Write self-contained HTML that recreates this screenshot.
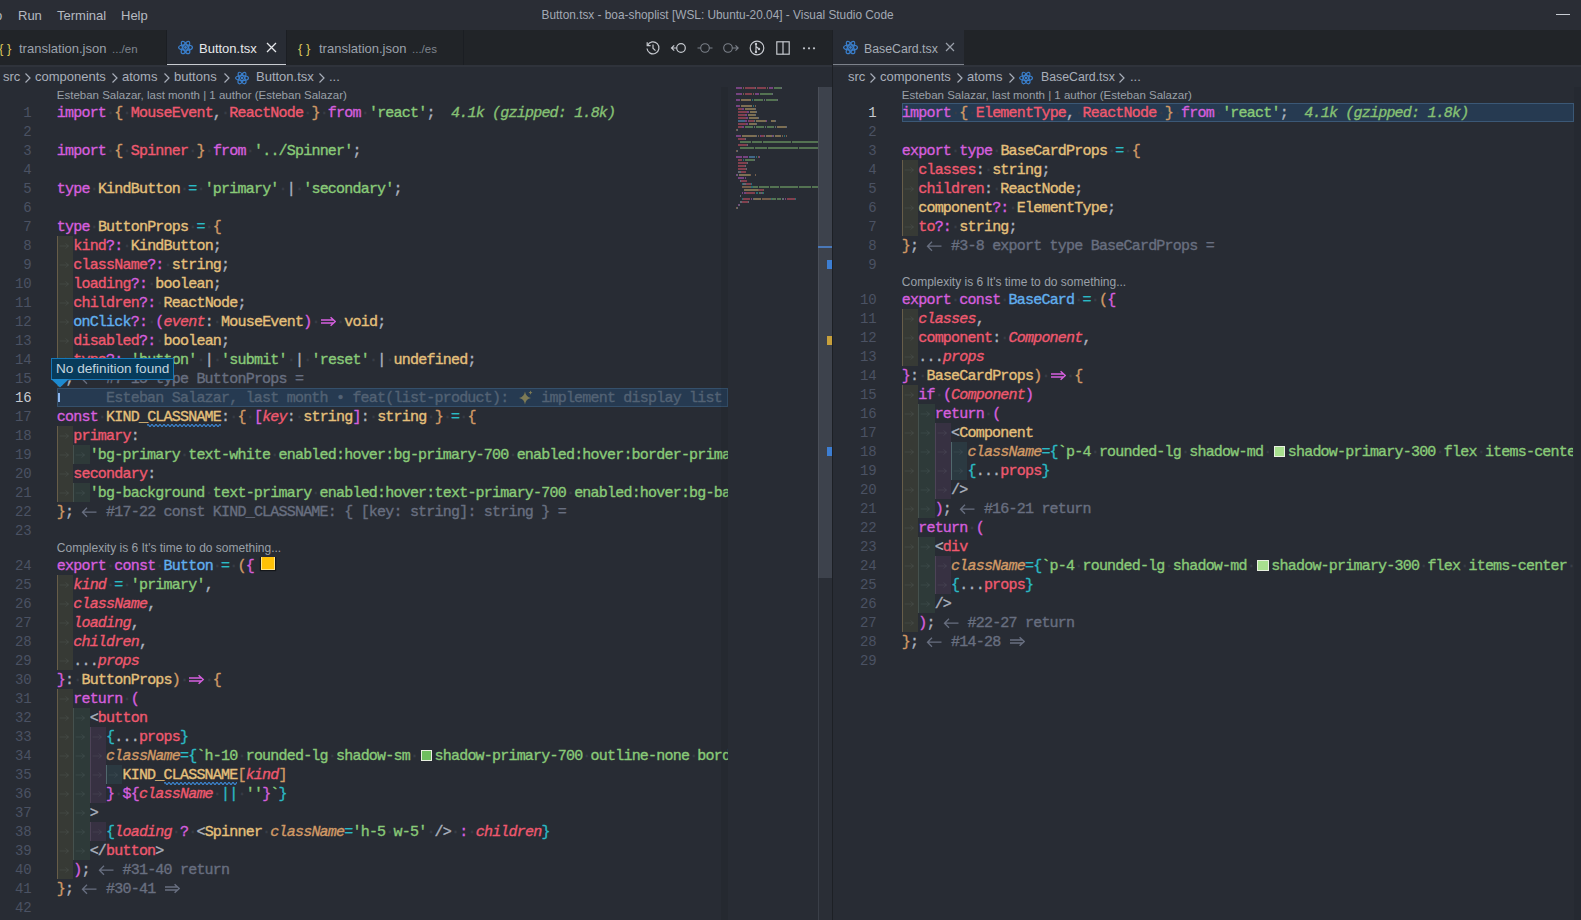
<!DOCTYPE html>
<html><head><meta charset="utf-8"><style>
*{margin:0;padding:0;box-sizing:border-box}
html,body{width:1581px;height:920px;overflow:hidden;background:#282c34}
body{position:relative;font-family:"Liberation Sans",sans-serif}
.abs{position:absolute}
#title{position:absolute;left:0;top:0;width:1581px;height:30px;background:#2a2d35}
.menu{position:absolute;top:8px;font-size:13px;color:#b6bac1;line-height:15px}
#ttl{position:absolute;left:541.6px;top:8px;font-size:11.85px;color:#a3a9b4;line-height:14px;white-space:nowrap}
#tabs{position:absolute;left:0;top:30px;width:1581px;height:35px;background:#212428}
.tab{position:absolute;top:30px;height:35px}
.tt{position:absolute;top:41px;font-size:13px;line-height:15px;white-space:nowrap}
.ai{position:absolute;top:40px}
.bc{position:absolute;font-size:13px;line-height:20px;color:#a9afba;white-space:nowrap}
.lens{position:absolute;font-size:11.5px;line-height:16px;height:16px;color:#9aa0a8;white-space:nowrap}
.cl{position:absolute;height:19px;white-space:pre;overflow:hidden;font-family:"Liberation Mono",monospace;font-size:15px;letter-spacing:-0.790px;line-height:19px;color:#abb2bf;-webkit-text-stroke:0.35px currentColor}
.cl span{font-family:"Liberation Mono",monospace}
.ln{position:absolute;width:40px;text-align:right;height:19px;font-family:"Liberation Mono",monospace;font-size:14px;letter-spacing:-0.2px;line-height:20px;color:#4b5263}
.ln.act{color:#c6cad1}
.ib{position:absolute;height:19px}
.gd{position:absolute;width:1px;height:19px}
.ta{position:absolute}
.d{color:#383d47}
.k{color:#d55fde} .y{color:#e5c07b} .r{color:#ef596f} .ri{color:#ef596f;font-style:italic}
.s{color:#89ca78} .c{color:#2bbac5} .g{color:#abb2bf} .bl{color:#61afef}
.oi{color:#d19a66;font-style:italic} .b1{color:#d19a66} .b2{color:#d55fde} .b3{color:#2bbac5}
.cm{color:#686f80} .ic{color:#86c174;font-style:italic} .bm{color:#536274}
.sq{position:relative} .wv{position:absolute;left:0;top:14.30px}
.wd2{display:inline-block;width:16.42px;height:19px;vertical-align:top;letter-spacing:0}
.sw{display:inline-block;width:16.42px;height:19px;vertical-align:top;position:relative;margin-top:-1.2px}
.sw i{position:absolute;left:2.5px;top:4px;width:11.5px;height:11.5px;border:1px solid #e8f0e0}
.bulb{display:inline-block;width:14px;height:14px;margin-left:7px;vertical-align:top;margin-top:-0.8999999999999999px;background:#ffc107;border:1px solid #ffe58a;box-shadow:0 0 1px 1px rgba(0,0,0,0.5)}
.mm{position:absolute;height:2px;opacity:0.45}
</style></head>
<body>
<div id="title"></div>
<div class="menu" style="left:-5px">o</div>
<div class="menu" style="left:18px">Run</div>
<div class="menu" style="left:57px">Terminal</div>
<div class="menu" style="left:121px">Help</div>
<div id="ttl">Button.tsx - boa-shoplist [WSL: Ubuntu-20.04] - Visual Studio Code</div>
<div class="abs" style="left:1556px;top:14px;width:14px;height:1px;background:#c8ccd3"></div>

<div id="tabs"></div>
<div class="tab" style="left:0;width:167px;background:#212428;border-right:1px solid #1b1e23"></div>
<div class="tab" style="left:167px;width:119px;background:#282c34;border-bottom:1.5px solid #c9ccd1"></div>
<div class="tab" style="left:286px;width:178px;background:#212428;border-right:1px solid #1b1e23;border-left:1px solid #1b1e23"></div>
<div class="tt" style="left:-1px;color:#d9c65a;font-size:13px">{ }</div>
<div class="tt" style="left:19px;color:#9ba1ab">translation.json</div>
<div class="tt" style="left:112px;color:#7f858f;font-size:11.5px;top:42px">.../en</div>
<svg style="position:absolute;left:178px;top:40px" width="15" height="15" viewBox="0 0 24 24"><g fill="none" stroke="#3a7fcc" stroke-width="2.1"><ellipse cx="12" cy="12" rx="11" ry="4.2"/><ellipse cx="12" cy="12" rx="11" ry="4.2" transform="rotate(60 12 12)"/><ellipse cx="12" cy="12" rx="11" ry="4.2" transform="rotate(120 12 12)"/></g><circle cx="12" cy="12" r="2.3" fill="#3a7fcc"/></svg>
<div class="tt" style="left:199px;color:#e6e8eb">Button.tsx</div>
<svg class="abs" style="left:266px;top:42px" width="11" height="11" viewBox="0 0 11 11"><path d="M1 1L10 10M10 1L1 10" stroke="#e6e8eb" stroke-width="1.3"/></svg>
<div class="tt" style="left:298px;color:#d9c65a">{ }</div>
<div class="tt" style="left:319px;color:#9ba1ab">translation.json</div>
<div class="tt" style="left:412px;color:#7f858f;font-size:11.5px;top:42px">.../es</div>
<svg class="ai" style="left:645px" width="16" height="16" viewBox="0 0 16 16"><g fill="none" stroke="#c5c8ce" stroke-width="1.2"><path d="M2.6 5.2A6 6 0 1 1 2 8.5"/><path d="M2.2 2.2V5.6H5.6"/><path d="M8 4.5V8.3L10.5 10.6"/></g></svg><svg class="ai" style="left:670px" width="18" height="16" viewBox="0 0 18 16"><g fill="none" stroke="#c5c8ce" stroke-width="1.2"><circle cx="11" cy="8" r="4.3"/><path d="M6.7 8H1.5M4.2 5.3L1.5 8L4.2 10.7"/></g></svg><svg class="ai" style="left:697px" width="16" height="16" viewBox="0 0 16 16"><g fill="none" stroke="#7b8089" stroke-width="1.1"><circle cx="8" cy="8" r="4.3"/><path d="M0.5 8H3.7M12.3 8H15.5"/></g></svg><svg class="ai" style="left:722px" width="18" height="16" viewBox="0 0 18 16"><g fill="none" stroke="#7b8089" stroke-width="1.1"><circle cx="6" cy="8" r="4.3"/><path d="M10.3 8H16M13.5 5.3L16.2 8L13.5 10.7"/></g></svg><svg class="ai" style="left:749px" width="16" height="16" viewBox="0 0 16 16"><g fill="none" stroke="#c5c8ce" stroke-width="1.2"><circle cx="8" cy="8" r="6.8"/><path d="M7 3.5V12.5M7 6.5L10 9"/></g><circle cx="7" cy="4" r="1.2" fill="#c5c8ce"/><circle cx="7" cy="12" r="1.2" fill="#c5c8ce"/><circle cx="10" cy="9" r="1.2" fill="#c5c8ce"/></svg><svg class="ai" style="left:775px" width="16" height="16" viewBox="0 0 16 16"><g fill="none" stroke="#c5c8ce" stroke-width="1.2"><rect x="1.8" y="1.8" width="12.4" height="12.4"/><path d="M8 1.8V14.2"/></g></svg><svg class="ai" style="left:801px" width="16" height="16" viewBox="0 0 16 16"><g fill="#c5c8ce"><circle cx="3" cy="8.3" r="1.1"/><circle cx="8" cy="8.3" r="1.1"/><circle cx="13" cy="8.3" r="1.1"/></g></svg>
<div class="tab" style="left:832.5px;width:131.5px;background:#282c34;border-bottom:1px solid #7d828b"></div>
<svg style="position:absolute;left:843px;top:40px" width="15" height="15" viewBox="0 0 24 24"><g fill="none" stroke="#3a7fcc" stroke-width="2.1"><ellipse cx="12" cy="12" rx="11" ry="4.2"/><ellipse cx="12" cy="12" rx="11" ry="4.2" transform="rotate(60 12 12)"/><ellipse cx="12" cy="12" rx="11" ry="4.2" transform="rotate(120 12 12)"/></g><circle cx="12" cy="12" r="2.3" fill="#3a7fcc"/></svg>
<div class="tt" style="left:864px;color:#a6acb6;font-size:12.3px;top:41.5px">BaseCard.tsx</div>
<svg class="abs" style="left:945px;top:42px" width="10" height="10" viewBox="0 0 10 10"><path d="M1 1L9 9M9 1L1 9" stroke="#9aa0aa" stroke-width="1.2"/></svg>
<div class="abs" style="left:0;top:65px;width:1581px;height:1.5px;background:#2f333b"></div>

<div class="bc" style="left:3px;top:67px;font-size:13px">src</div><svg style="position:absolute;left:24px;top:72px" width="8" height="12" viewBox="0 0 8 12"><path d="M1.5 1.5L6 6L1.5 10.5" fill="none" stroke="#a9afba" stroke-width="1.2"/></svg><div class="bc" style="left:35px;top:67px;font-size:13px">components</div><svg style="position:absolute;left:111px;top:72px" width="8" height="12" viewBox="0 0 8 12"><path d="M1.5 1.5L6 6L1.5 10.5" fill="none" stroke="#a9afba" stroke-width="1.2"/></svg><div class="bc" style="left:122px;top:67px;font-size:13px">atoms</div><svg style="position:absolute;left:163px;top:72px" width="8" height="12" viewBox="0 0 8 12"><path d="M1.5 1.5L6 6L1.5 10.5" fill="none" stroke="#a9afba" stroke-width="1.2"/></svg><div class="bc" style="left:174px;top:67px;font-size:13px">buttons</div><svg style="position:absolute;left:223px;top:72px" width="8" height="12" viewBox="0 0 8 12"><path d="M1.5 1.5L6 6L1.5 10.5" fill="none" stroke="#a9afba" stroke-width="1.2"/></svg><svg style="position:absolute;left:235px;top:71px" width="14" height="14" viewBox="0 0 24 24"><g fill="none" stroke="#3a7fcc" stroke-width="2.1"><ellipse cx="12" cy="12" rx="11" ry="4.2"/><ellipse cx="12" cy="12" rx="11" ry="4.2" transform="rotate(60 12 12)"/><ellipse cx="12" cy="12" rx="11" ry="4.2" transform="rotate(120 12 12)"/></g><circle cx="12" cy="12" r="2.3" fill="#3a7fcc"/></svg><div class="bc" style="left:256px;top:67px;font-size:13px">Button.tsx</div><svg style="position:absolute;left:318px;top:72px" width="8" height="12" viewBox="0 0 8 12"><path d="M1.5 1.5L6 6L1.5 10.5" fill="none" stroke="#a9afba" stroke-width="1.2"/></svg><div class="bc" style="left:329px;top:67px;font-size:13px">...</div>
<div class="bc" style="left:848px;top:67px;font-size:13px">src</div><svg style="position:absolute;left:869px;top:72px" width="8" height="12" viewBox="0 0 8 12"><path d="M1.5 1.5L6 6L1.5 10.5" fill="none" stroke="#a9afba" stroke-width="1.2"/></svg><div class="bc" style="left:880px;top:67px;font-size:13px">components</div><svg style="position:absolute;left:956px;top:72px" width="8" height="12" viewBox="0 0 8 12"><path d="M1.5 1.5L6 6L1.5 10.5" fill="none" stroke="#a9afba" stroke-width="1.2"/></svg><div class="bc" style="left:967px;top:67px;font-size:13px">atoms</div><svg style="position:absolute;left:1008px;top:72px" width="8" height="12" viewBox="0 0 8 12"><path d="M1.5 1.5L6 6L1.5 10.5" fill="none" stroke="#a9afba" stroke-width="1.2"/></svg><svg style="position:absolute;left:1019px;top:71px" width="14" height="14" viewBox="0 0 24 24"><g fill="none" stroke="#3a7fcc" stroke-width="2.1"><ellipse cx="12" cy="12" rx="11" ry="4.2"/><ellipse cx="12" cy="12" rx="11" ry="4.2" transform="rotate(60 12 12)"/><ellipse cx="12" cy="12" rx="11" ry="4.2" transform="rotate(120 12 12)"/></g><circle cx="12" cy="12" r="2.3" fill="#3a7fcc"/></svg><div class="bc" style="left:1041px;top:67px;font-size:12.3px">BaseCard.tsx</div><svg style="position:absolute;left:1118px;top:72px" width="8" height="12" viewBox="0 0 8 12"><path d="M1.5 1.5L6 6L1.5 10.5" fill="none" stroke="#a9afba" stroke-width="1.2"/></svg><div class="bc" style="left:1130px;top:67px;font-size:13px">...</div>

<!-- current line highlights -->
<div class="abs" style="left:56.8px;top:387.60px;width:671px;height:19px;background:#263a51;border:1px solid #35506b"></div>
<div class="abs" style="left:901.8px;top:102.60px;width:672px;height:19px;background:#263a51;border:1px solid #3b5876"></div>

<div class="lens" style="left:56.80px;top:87.30px;font-size:11.5px">Esteban Salazar, last month | 1 author (Esteban Salazar)</div><div class="ln" style="left:-8.50px;top:102.60px">1</div><div class="cl" style="left:56.80px;top:103.80px;width:671.40px"><span class="k">import</span><span class="g"><span class="d">·</span></span><span class="b1">{</span><span class="g"><span class="d">·</span></span><span class="r">MouseEvent</span><span class="g">,</span><span class="g"><span class="d">·</span></span><span class="r">ReactNode</span><span class="g"><span class="d">·</span></span><span class="b1">}</span><span class="g"><span class="d">·</span></span><span class="k">from</span><span class="g"><span class="d">·</span></span><span class="s">&#x27;react&#x27;</span><span class="g">;</span><span class="ic">  4.1k (gzipped: 1.8k)</span></div><div class="ln" style="left:-8.50px;top:121.60px">2</div><div class="cl" style="left:56.80px;top:122.80px;width:671.40px"></div><div class="ln" style="left:-8.50px;top:140.60px">3</div><div class="cl" style="left:56.80px;top:141.80px;width:671.40px"><span class="k">import</span><span class="g"><span class="d">·</span></span><span class="b1">{</span><span class="g"><span class="d">·</span></span><span class="r">Spinner</span><span class="g"><span class="d">·</span></span><span class="b1">}</span><span class="g"><span class="d">·</span></span><span class="k">from</span><span class="g"><span class="d">·</span></span><span class="s">&#x27;../Spinner&#x27;</span><span class="g">;</span></div><div class="ln" style="left:-8.50px;top:159.60px">4</div><div class="cl" style="left:56.80px;top:160.80px;width:671.40px"></div><div class="ln" style="left:-8.50px;top:178.60px">5</div><div class="cl" style="left:56.80px;top:179.80px;width:671.40px"><span class="k">type</span><span class="g"><span class="d">·</span></span><span class="y">KindButton</span><span class="g"><span class="d">·</span></span><span class="c">=</span><span class="g"><span class="d">·</span></span><span class="s">&#x27;primary&#x27;</span><span class="g"><span class="d">·</span></span><span class="g">|</span><span class="g"><span class="d">·</span></span><span class="s">&#x27;secondary&#x27;</span><span class="g">;</span></div><div class="ln" style="left:-8.50px;top:197.60px">6</div><div class="cl" style="left:56.80px;top:198.80px;width:671.40px"></div><div class="ln" style="left:-8.50px;top:216.60px">7</div><div class="cl" style="left:56.80px;top:217.80px;width:671.40px"><span class="k">type</span><span class="g"><span class="d">·</span></span><span class="y">ButtonProps</span><span class="g"><span class="d">·</span></span><span class="c">=</span><span class="g"><span class="d">·</span></span><span class="b1">{</span></div><div class="ib" style="left:56.80px;top:235.60px;width:16.42px;background:rgba(255,255,64,0.07)"></div><div class="gd" style="left:56.80px;top:235.60px;background:rgba(214,176,120,0.30)"></div><svg class="ta" style="left:58.80px;top:235.60px" width="12" height="19" viewBox="0 0 12 19"><path d="M0.5 10H9.5M6.5 7.5L9.5 10L6.5 12.5" fill="none" stroke="rgba(171,178,191,0.10)" stroke-width="1"/></svg><div class="ln" style="left:-8.50px;top:235.60px">8</div><div class="cl" style="left:73.22px;top:236.80px;width:654.98px"><span class="r">kind</span><span class="k">?:</span><span class="g"><span class="d">·</span></span><span class="y">KindButton</span><span class="g">;</span></div><div class="ib" style="left:56.80px;top:254.60px;width:16.42px;background:rgba(255,255,64,0.07)"></div><div class="gd" style="left:56.80px;top:254.60px;background:rgba(214,176,120,0.30)"></div><svg class="ta" style="left:58.80px;top:254.60px" width="12" height="19" viewBox="0 0 12 19"><path d="M0.5 10H9.5M6.5 7.5L9.5 10L6.5 12.5" fill="none" stroke="rgba(171,178,191,0.10)" stroke-width="1"/></svg><div class="ln" style="left:-8.50px;top:254.60px">9</div><div class="cl" style="left:73.22px;top:255.80px;width:654.98px"><span class="r">className</span><span class="k">?:</span><span class="g"><span class="d">·</span></span><span class="y">string</span><span class="g">;</span></div><div class="ib" style="left:56.80px;top:273.60px;width:16.42px;background:rgba(255,255,64,0.07)"></div><div class="gd" style="left:56.80px;top:273.60px;background:rgba(214,176,120,0.30)"></div><svg class="ta" style="left:58.80px;top:273.60px" width="12" height="19" viewBox="0 0 12 19"><path d="M0.5 10H9.5M6.5 7.5L9.5 10L6.5 12.5" fill="none" stroke="rgba(171,178,191,0.10)" stroke-width="1"/></svg><div class="ln" style="left:-8.50px;top:273.60px">10</div><div class="cl" style="left:73.22px;top:274.80px;width:654.98px"><span class="r">loading</span><span class="k">?:</span><span class="g"><span class="d">·</span></span><span class="y">boolean</span><span class="g">;</span></div><div class="ib" style="left:56.80px;top:292.60px;width:16.42px;background:rgba(255,255,64,0.07)"></div><div class="gd" style="left:56.80px;top:292.60px;background:rgba(214,176,120,0.30)"></div><svg class="ta" style="left:58.80px;top:292.60px" width="12" height="19" viewBox="0 0 12 19"><path d="M0.5 10H9.5M6.5 7.5L9.5 10L6.5 12.5" fill="none" stroke="rgba(171,178,191,0.10)" stroke-width="1"/></svg><div class="ln" style="left:-8.50px;top:292.60px">11</div><div class="cl" style="left:73.22px;top:293.80px;width:654.98px"><span class="r">children</span><span class="k">?:</span><span class="g"><span class="d">·</span></span><span class="y">ReactNode</span><span class="g">;</span></div><div class="ib" style="left:56.80px;top:311.60px;width:16.42px;background:rgba(255,255,64,0.07)"></div><div class="gd" style="left:56.80px;top:311.60px;background:rgba(214,176,120,0.30)"></div><svg class="ta" style="left:58.80px;top:311.60px" width="12" height="19" viewBox="0 0 12 19"><path d="M0.5 10H9.5M6.5 7.5L9.5 10L6.5 12.5" fill="none" stroke="rgba(171,178,191,0.10)" stroke-width="1"/></svg><div class="ln" style="left:-8.50px;top:311.60px">12</div><div class="cl" style="left:73.22px;top:312.80px;width:654.98px"><span class="bl">onClick</span><span class="k">?:</span><span class="g"><span class="d">·</span></span><span class="b2">(</span><span class="ri">event</span><span class="g">:</span><span class="g"><span class="d">·</span></span><span class="y">MouseEvent</span><span class="b2">)</span><span class="g"><span class="d">·</span></span><span class="wd2"><svg width="16.42" height="19" style="vertical-align:top;margin-top:-1.2px" viewBox="0 0 16.42 19"><path d="M1 7.9H14M1 11H14M10.6 5.2L15.2 9.45L10.6 13.7" fill="none" stroke="#d55fde" stroke-width="1.5"/></svg></span><span class="g"><span class="d">·</span></span><span class="y">void</span><span class="g">;</span></div><div class="ib" style="left:56.80px;top:330.60px;width:16.42px;background:rgba(255,255,64,0.07)"></div><div class="gd" style="left:56.80px;top:330.60px;background:rgba(214,176,120,0.30)"></div><svg class="ta" style="left:58.80px;top:330.60px" width="12" height="19" viewBox="0 0 12 19"><path d="M0.5 10H9.5M6.5 7.5L9.5 10L6.5 12.5" fill="none" stroke="rgba(171,178,191,0.10)" stroke-width="1"/></svg><div class="ln" style="left:-8.50px;top:330.60px">13</div><div class="cl" style="left:73.22px;top:331.80px;width:654.98px"><span class="r">disabled</span><span class="k">?:</span><span class="g"><span class="d">·</span></span><span class="y">boolean</span><span class="g">;</span></div><div class="ib" style="left:56.80px;top:349.60px;width:16.42px;background:rgba(255,255,64,0.07)"></div><div class="gd" style="left:56.80px;top:349.60px;background:rgba(214,176,120,0.30)"></div><svg class="ta" style="left:58.80px;top:349.60px" width="12" height="19" viewBox="0 0 12 19"><path d="M0.5 10H9.5M6.5 7.5L9.5 10L6.5 12.5" fill="none" stroke="rgba(171,178,191,0.10)" stroke-width="1"/></svg><div class="ln" style="left:-8.50px;top:349.60px">14</div><div class="cl" style="left:73.22px;top:350.80px;width:654.98px"><span class="r">type</span><span class="k">?:</span><span class="g"><span class="d">·</span></span><span class="s">&#x27;button&#x27;</span><span class="g"><span class="d">·</span></span><span class="g">|</span><span class="g"><span class="d">·</span></span><span class="s">&#x27;submit&#x27;</span><span class="g"><span class="d">·</span></span><span class="g">|</span><span class="g"><span class="d">·</span></span><span class="s">&#x27;reset&#x27;</span><span class="g"><span class="d">·</span></span><span class="g">|</span><span class="g"><span class="d">·</span></span><span class="y">undefined</span><span class="g">;</span></div><div class="ln" style="left:-8.50px;top:368.60px">15</div><div class="cl" style="left:56.80px;top:369.80px;width:671.40px"><span class="b1">}</span><span class="g">;</span><span class="cm"> </span><span class="wd2"><svg width="16.42" height="19" style="vertical-align:top;margin-top:-1.2px" viewBox="0 0 16.42 19"><path d="M1.5 10.2H15.5M6 5.7L1.5 10.2L6 14.7" fill="none" stroke="#686f80" stroke-width="1.3"/></svg></span><span class="cm"> #7-15 type ButtonProps =</span></div><div class="ln act" style="left:-8.50px;top:387.60px">16</div><div class="cl" style="left:56.80px;top:388.80px;width:671.40px"><span class="bm">      Esteban Salazar, last month • feat(list-product): </span><span class="wd2"><svg width="16.42" height="19" style="vertical-align:top;margin-top:-1.2px" viewBox="0 0 16.42 19"><path d="M8 3.5Q8.8 9 14 10Q8.8 11 8 16.5Q7.2 11 2 10Q7.2 9 8 3.5Z" fill="#7d7a55"/><path d="M13.5 2.5Q13.8 4.3 15.5 4.6Q13.8 4.9 13.5 6.7Q13.2 4.9 11.5 4.6Q13.2 4.3 13.5 2.5Z" fill="#7d7a55"/></svg></span><span class="bm"> implement display list</span></div><div class="ln" style="left:-8.50px;top:406.60px">17</div><div class="cl" style="left:56.80px;top:407.80px;width:671.40px"><span class="k">const</span><span class="g"><span class="d">·</span></span><span class="y">KIND_</span><span class="y sq">CLASSNAME<svg class="wv" width="73.89" height="4" viewBox="0 0 73.89 4"><path d="M0 2.5Q1 0.5 2 2.5T4 2.5Q5 0.5 6 2.5T8 2.5Q9 0.5 10 2.5T12 2.5Q13 0.5 14 2.5T16 2.5Q17 0.5 18 2.5T20 2.5Q21 0.5 22 2.5T24 2.5Q25 0.5 26 2.5T28 2.5Q29 0.5 30 2.5T32 2.5Q33 0.5 34 2.5T36 2.5Q37 0.5 38 2.5T40 2.5Q41 0.5 42 2.5T44 2.5Q45 0.5 46 2.5T48 2.5Q49 0.5 50 2.5T52 2.5Q53 0.5 54 2.5T56 2.5Q57 0.5 58 2.5T60 2.5Q61 0.5 62 2.5T64 2.5Q65 0.5 66 2.5T68 2.5Q69 0.5 70 2.5T72 2.5Q73 0.5 74 2.5T76 2.5Q77 0.5 78 2.5T80 2.5" fill="none" stroke="#3f8fe0" stroke-width="1.1"/></svg></span><span class="g">:</span><span class="g"><span class="d">·</span></span><span class="b1">{</span><span class="g"><span class="d">·</span></span><span class="b2">[</span><span class="ri">key</span><span class="g">:</span><span class="g"><span class="d">·</span></span><span class="y">string</span><span class="b2">]</span><span class="g">:</span><span class="g"><span class="d">·</span></span><span class="y">string</span><span class="g"><span class="d">·</span></span><span class="b1">}</span><span class="g"><span class="d">·</span></span><span class="c">=</span><span class="g"><span class="d">·</span></span><span class="b1">{</span></div><div class="ib" style="left:56.80px;top:425.60px;width:16.42px;background:rgba(255,255,64,0.07)"></div><div class="gd" style="left:56.80px;top:425.60px;background:rgba(214,176,120,0.30)"></div><svg class="ta" style="left:58.80px;top:425.60px" width="12" height="19" viewBox="0 0 12 19"><path d="M0.5 10H9.5M6.5 7.5L9.5 10L6.5 12.5" fill="none" stroke="rgba(171,178,191,0.10)" stroke-width="1"/></svg><div class="ln" style="left:-8.50px;top:425.60px">18</div><div class="cl" style="left:73.22px;top:426.80px;width:654.98px"><span class="r">primary</span><span class="g">:</span></div><div class="ib" style="left:56.80px;top:444.60px;width:16.42px;background:rgba(255,255,64,0.07)"></div><div class="gd" style="left:56.80px;top:444.60px;background:rgba(214,176,120,0.30)"></div><svg class="ta" style="left:58.80px;top:444.60px" width="12" height="19" viewBox="0 0 12 19"><path d="M0.5 10H9.5M6.5 7.5L9.5 10L6.5 12.5" fill="none" stroke="rgba(171,178,191,0.10)" stroke-width="1"/></svg><div class="ib" style="left:73.22px;top:444.60px;width:16.42px;background:rgba(127,255,127,0.07)"></div><div class="gd" style="left:73.22px;top:444.60px;background:rgba(190,205,190,0.16)"></div><svg class="ta" style="left:75.22px;top:444.60px" width="12" height="19" viewBox="0 0 12 19"><path d="M0.5 10H9.5M6.5 7.5L9.5 10L6.5 12.5" fill="none" stroke="rgba(171,178,191,0.10)" stroke-width="1"/></svg><div class="ln" style="left:-8.50px;top:444.60px">19</div><div class="cl" style="left:89.64px;top:445.80px;width:638.56px"><span class="s">&#x27;bg-primary<span class="d">·</span>text-white<span class="d">·</span>enabled:hover:bg-primary-700<span class="d">·</span>enabled:hover:border-primary-700&#x27;</span></div><div class="ib" style="left:56.80px;top:463.60px;width:16.42px;background:rgba(255,255,64,0.07)"></div><div class="gd" style="left:56.80px;top:463.60px;background:rgba(214,176,120,0.30)"></div><svg class="ta" style="left:58.80px;top:463.60px" width="12" height="19" viewBox="0 0 12 19"><path d="M0.5 10H9.5M6.5 7.5L9.5 10L6.5 12.5" fill="none" stroke="rgba(171,178,191,0.10)" stroke-width="1"/></svg><div class="ln" style="left:-8.50px;top:463.60px">20</div><div class="cl" style="left:73.22px;top:464.80px;width:654.98px"><span class="r">secondary</span><span class="g">:</span></div><div class="ib" style="left:56.80px;top:482.60px;width:16.42px;background:rgba(255,255,64,0.07)"></div><div class="gd" style="left:56.80px;top:482.60px;background:rgba(214,176,120,0.30)"></div><svg class="ta" style="left:58.80px;top:482.60px" width="12" height="19" viewBox="0 0 12 19"><path d="M0.5 10H9.5M6.5 7.5L9.5 10L6.5 12.5" fill="none" stroke="rgba(171,178,191,0.10)" stroke-width="1"/></svg><div class="ib" style="left:73.22px;top:482.60px;width:16.42px;background:rgba(127,255,127,0.07)"></div><div class="gd" style="left:73.22px;top:482.60px;background:rgba(190,205,190,0.16)"></div><svg class="ta" style="left:75.22px;top:482.60px" width="12" height="19" viewBox="0 0 12 19"><path d="M0.5 10H9.5M6.5 7.5L9.5 10L6.5 12.5" fill="none" stroke="rgba(171,178,191,0.10)" stroke-width="1"/></svg><div class="ln" style="left:-8.50px;top:482.60px">21</div><div class="cl" style="left:89.64px;top:483.80px;width:638.56px"><span class="s">&#x27;bg-background<span class="d">·</span>text-primary<span class="d">·</span>enabled:hover:text-primary-700<span class="d">·</span>enabled:hover:bg-background-700&#x27;</span></div><div class="ln" style="left:-8.50px;top:501.60px">22</div><div class="cl" style="left:56.80px;top:502.80px;width:671.40px"><span class="b1">}</span><span class="g">;</span><span class="cm"> </span><span class="wd2"><svg width="16.42" height="19" style="vertical-align:top;margin-top:-1.2px" viewBox="0 0 16.42 19"><path d="M1.5 10.2H15.5M6 5.7L1.5 10.2L6 14.7" fill="none" stroke="#686f80" stroke-width="1.3"/></svg></span><span class="cm"> #17-22 const KIND_CLASSNAME: { [key: string]: string } =</span></div><div class="ln" style="left:-8.50px;top:520.60px">23</div><div class="cl" style="left:56.80px;top:521.80px;width:671.40px"></div><div class="lens" style="left:56.80px;top:540.30px;font-size:12px">Complexity is 6 It&#x27;s time to do something...</div><div class="ln" style="left:-8.50px;top:555.60px">24</div><div class="cl" style="left:56.80px;top:556.80px;width:671.40px"><span class="k">export</span><span class="g"><span class="d">·</span></span><span class="k">const</span><span class="g"><span class="d">·</span></span><span class="bl">Button</span><span class="g"><span class="d">·</span></span><span class="c">=</span><span class="g"><span class="d">·</span></span><span class="b1">(</span><span class="b2">{</span><span class="bulb"></span></div><div class="ib" style="left:56.80px;top:574.60px;width:16.42px;background:rgba(255,255,64,0.07)"></div><div class="gd" style="left:56.80px;top:574.60px;background:rgba(214,176,120,0.30)"></div><svg class="ta" style="left:58.80px;top:574.60px" width="12" height="19" viewBox="0 0 12 19"><path d="M0.5 10H9.5M6.5 7.5L9.5 10L6.5 12.5" fill="none" stroke="rgba(171,178,191,0.10)" stroke-width="1"/></svg><div class="ln" style="left:-8.50px;top:574.60px">25</div><div class="cl" style="left:73.22px;top:575.80px;width:654.98px"><span class="ri">kind</span><span class="g"><span class="d">·</span></span><span class="c">=</span><span class="g"><span class="d">·</span></span><span class="s">&#x27;primary&#x27;</span><span class="g">,</span></div><div class="ib" style="left:56.80px;top:593.60px;width:16.42px;background:rgba(255,255,64,0.07)"></div><div class="gd" style="left:56.80px;top:593.60px;background:rgba(214,176,120,0.30)"></div><svg class="ta" style="left:58.80px;top:593.60px" width="12" height="19" viewBox="0 0 12 19"><path d="M0.5 10H9.5M6.5 7.5L9.5 10L6.5 12.5" fill="none" stroke="rgba(171,178,191,0.10)" stroke-width="1"/></svg><div class="ln" style="left:-8.50px;top:593.60px">26</div><div class="cl" style="left:73.22px;top:594.80px;width:654.98px"><span class="ri">className</span><span class="g">,</span></div><div class="ib" style="left:56.80px;top:612.60px;width:16.42px;background:rgba(255,255,64,0.07)"></div><div class="gd" style="left:56.80px;top:612.60px;background:rgba(214,176,120,0.30)"></div><svg class="ta" style="left:58.80px;top:612.60px" width="12" height="19" viewBox="0 0 12 19"><path d="M0.5 10H9.5M6.5 7.5L9.5 10L6.5 12.5" fill="none" stroke="rgba(171,178,191,0.10)" stroke-width="1"/></svg><div class="ln" style="left:-8.50px;top:612.60px">27</div><div class="cl" style="left:73.22px;top:613.80px;width:654.98px"><span class="ri">loading</span><span class="g">,</span></div><div class="ib" style="left:56.80px;top:631.60px;width:16.42px;background:rgba(255,255,64,0.07)"></div><div class="gd" style="left:56.80px;top:631.60px;background:rgba(214,176,120,0.30)"></div><svg class="ta" style="left:58.80px;top:631.60px" width="12" height="19" viewBox="0 0 12 19"><path d="M0.5 10H9.5M6.5 7.5L9.5 10L6.5 12.5" fill="none" stroke="rgba(171,178,191,0.10)" stroke-width="1"/></svg><div class="ln" style="left:-8.50px;top:631.60px">28</div><div class="cl" style="left:73.22px;top:632.80px;width:654.98px"><span class="ri">children</span><span class="g">,</span></div><div class="ib" style="left:56.80px;top:650.60px;width:16.42px;background:rgba(255,255,64,0.07)"></div><div class="gd" style="left:56.80px;top:650.60px;background:rgba(214,176,120,0.30)"></div><svg class="ta" style="left:58.80px;top:650.60px" width="12" height="19" viewBox="0 0 12 19"><path d="M0.5 10H9.5M6.5 7.5L9.5 10L6.5 12.5" fill="none" stroke="rgba(171,178,191,0.10)" stroke-width="1"/></svg><div class="ln" style="left:-8.50px;top:650.60px">29</div><div class="cl" style="left:73.22px;top:651.80px;width:654.98px"><span class="g">...</span><span class="ri">props</span></div><div class="ln" style="left:-8.50px;top:669.60px">30</div><div class="cl" style="left:56.80px;top:670.80px;width:671.40px"><span class="b2">}</span><span class="g">:</span><span class="g"><span class="d">·</span></span><span class="y">ButtonProps</span><span class="b1">)</span><span class="g"><span class="d">·</span></span><span class="wd2"><svg width="16.42" height="19" style="vertical-align:top;margin-top:-1.2px" viewBox="0 0 16.42 19"><path d="M1 7.9H14M1 11H14M10.6 5.2L15.2 9.45L10.6 13.7" fill="none" stroke="#d55fde" stroke-width="1.5"/></svg></span><span class="g"><span class="d">·</span></span><span class="b1">{</span></div><div class="ib" style="left:56.80px;top:688.60px;width:16.42px;background:rgba(255,255,64,0.07)"></div><div class="gd" style="left:56.80px;top:688.60px;background:rgba(214,176,120,0.30)"></div><svg class="ta" style="left:58.80px;top:688.60px" width="12" height="19" viewBox="0 0 12 19"><path d="M0.5 10H9.5M6.5 7.5L9.5 10L6.5 12.5" fill="none" stroke="rgba(171,178,191,0.10)" stroke-width="1"/></svg><div class="ln" style="left:-8.50px;top:688.60px">31</div><div class="cl" style="left:73.22px;top:689.80px;width:654.98px"><span class="k">return</span><span class="g"><span class="d">·</span></span><span class="b2">(</span></div><div class="ib" style="left:56.80px;top:707.60px;width:16.42px;background:rgba(255,255,64,0.07)"></div><div class="gd" style="left:56.80px;top:707.60px;background:rgba(214,176,120,0.30)"></div><svg class="ta" style="left:58.80px;top:707.60px" width="12" height="19" viewBox="0 0 12 19"><path d="M0.5 10H9.5M6.5 7.5L9.5 10L6.5 12.5" fill="none" stroke="rgba(171,178,191,0.10)" stroke-width="1"/></svg><div class="ib" style="left:73.22px;top:707.60px;width:16.42px;background:rgba(127,255,127,0.07)"></div><div class="gd" style="left:73.22px;top:707.60px;background:rgba(190,205,190,0.16)"></div><svg class="ta" style="left:75.22px;top:707.60px" width="12" height="19" viewBox="0 0 12 19"><path d="M0.5 10H9.5M6.5 7.5L9.5 10L6.5 12.5" fill="none" stroke="rgba(171,178,191,0.10)" stroke-width="1"/></svg><div class="ln" style="left:-8.50px;top:707.60px">32</div><div class="cl" style="left:89.64px;top:708.80px;width:638.56px"><span class="g">&lt;</span><span class="r">button</span></div><div class="ib" style="left:56.80px;top:726.60px;width:16.42px;background:rgba(255,255,64,0.07)"></div><div class="gd" style="left:56.80px;top:726.60px;background:rgba(214,176,120,0.30)"></div><svg class="ta" style="left:58.80px;top:726.60px" width="12" height="19" viewBox="0 0 12 19"><path d="M0.5 10H9.5M6.5 7.5L9.5 10L6.5 12.5" fill="none" stroke="rgba(171,178,191,0.10)" stroke-width="1"/></svg><div class="ib" style="left:73.22px;top:726.60px;width:16.42px;background:rgba(127,255,127,0.07)"></div><div class="gd" style="left:73.22px;top:726.60px;background:rgba(190,205,190,0.16)"></div><svg class="ta" style="left:75.22px;top:726.60px" width="12" height="19" viewBox="0 0 12 19"><path d="M0.5 10H9.5M6.5 7.5L9.5 10L6.5 12.5" fill="none" stroke="rgba(171,178,191,0.10)" stroke-width="1"/></svg><div class="ib" style="left:89.64px;top:726.60px;width:16.42px;background:rgba(255,127,255,0.07)"></div><div class="gd" style="left:89.64px;top:726.60px;background:rgba(210,180,220,0.14)"></div><svg class="ta" style="left:91.64px;top:726.60px" width="12" height="19" viewBox="0 0 12 19"><path d="M0.5 10H9.5M6.5 7.5L9.5 10L6.5 12.5" fill="none" stroke="rgba(171,178,191,0.10)" stroke-width="1"/></svg><div class="ln" style="left:-8.50px;top:726.60px">33</div><div class="cl" style="left:106.06px;top:727.80px;width:622.14px"><span class="b3">{</span><span class="g">...</span><span class="r">props</span><span class="b3">}</span></div><div class="ib" style="left:56.80px;top:745.60px;width:16.42px;background:rgba(255,255,64,0.07)"></div><div class="gd" style="left:56.80px;top:745.60px;background:rgba(214,176,120,0.30)"></div><svg class="ta" style="left:58.80px;top:745.60px" width="12" height="19" viewBox="0 0 12 19"><path d="M0.5 10H9.5M6.5 7.5L9.5 10L6.5 12.5" fill="none" stroke="rgba(171,178,191,0.10)" stroke-width="1"/></svg><div class="ib" style="left:73.22px;top:745.60px;width:16.42px;background:rgba(127,255,127,0.07)"></div><div class="gd" style="left:73.22px;top:745.60px;background:rgba(190,205,190,0.16)"></div><svg class="ta" style="left:75.22px;top:745.60px" width="12" height="19" viewBox="0 0 12 19"><path d="M0.5 10H9.5M6.5 7.5L9.5 10L6.5 12.5" fill="none" stroke="rgba(171,178,191,0.10)" stroke-width="1"/></svg><div class="ib" style="left:89.64px;top:745.60px;width:16.42px;background:rgba(255,127,255,0.07)"></div><div class="gd" style="left:89.64px;top:745.60px;background:rgba(210,180,220,0.14)"></div><svg class="ta" style="left:91.64px;top:745.60px" width="12" height="19" viewBox="0 0 12 19"><path d="M0.5 10H9.5M6.5 7.5L9.5 10L6.5 12.5" fill="none" stroke="rgba(171,178,191,0.10)" stroke-width="1"/></svg><div class="ln" style="left:-8.50px;top:745.60px">34</div><div class="cl" style="left:106.06px;top:746.80px;width:622.14px"><span class="oi">className</span><span class="c">=</span><span class="b3">{</span><span class="s">`h-10<span class="d">·</span>rounded-lg<span class="d">·</span>shadow-sm<span class="d">·</span></span><span class="sw"><i style="background:#6fbf5f"></i></span><span class="s">shadow-primary-700<span class="d">·</span>outline-none<span class="d">·</span>border</span></div><div class="ib" style="left:56.80px;top:764.60px;width:16.42px;background:rgba(255,255,64,0.07)"></div><div class="gd" style="left:56.80px;top:764.60px;background:rgba(214,176,120,0.30)"></div><svg class="ta" style="left:58.80px;top:764.60px" width="12" height="19" viewBox="0 0 12 19"><path d="M0.5 10H9.5M6.5 7.5L9.5 10L6.5 12.5" fill="none" stroke="rgba(171,178,191,0.10)" stroke-width="1"/></svg><div class="ib" style="left:73.22px;top:764.60px;width:16.42px;background:rgba(127,255,127,0.07)"></div><div class="gd" style="left:73.22px;top:764.60px;background:rgba(190,205,190,0.16)"></div><svg class="ta" style="left:75.22px;top:764.60px" width="12" height="19" viewBox="0 0 12 19"><path d="M0.5 10H9.5M6.5 7.5L9.5 10L6.5 12.5" fill="none" stroke="rgba(171,178,191,0.10)" stroke-width="1"/></svg><div class="ib" style="left:89.64px;top:764.60px;width:16.42px;background:rgba(255,127,255,0.07)"></div><div class="gd" style="left:89.64px;top:764.60px;background:rgba(210,180,220,0.14)"></div><svg class="ta" style="left:91.64px;top:764.60px" width="12" height="19" viewBox="0 0 12 19"><path d="M0.5 10H9.5M6.5 7.5L9.5 10L6.5 12.5" fill="none" stroke="rgba(171,178,191,0.10)" stroke-width="1"/></svg><div class="ib" style="left:106.06px;top:764.60px;width:16.42px;background:rgba(79,236,236,0.07)"></div><div class="gd" style="left:106.06px;top:764.60px;background:rgba(170,215,215,0.30)"></div><svg class="ta" style="left:108.06px;top:764.60px" width="12" height="19" viewBox="0 0 12 19"><path d="M0.5 10H9.5M6.5 7.5L9.5 10L6.5 12.5" fill="none" stroke="rgba(171,178,191,0.10)" stroke-width="1"/></svg><div class="ln" style="left:-8.50px;top:764.60px">35</div><div class="cl" style="left:122.48px;top:765.80px;width:605.72px"><span class="y">KIND_</span><span class="y sq">CLASSNAME<svg class="wv" width="73.89" height="4" viewBox="0 0 73.89 4"><path d="M0 2.5Q1 0.5 2 2.5T4 2.5Q5 0.5 6 2.5T8 2.5Q9 0.5 10 2.5T12 2.5Q13 0.5 14 2.5T16 2.5Q17 0.5 18 2.5T20 2.5Q21 0.5 22 2.5T24 2.5Q25 0.5 26 2.5T28 2.5Q29 0.5 30 2.5T32 2.5Q33 0.5 34 2.5T36 2.5Q37 0.5 38 2.5T40 2.5Q41 0.5 42 2.5T44 2.5Q45 0.5 46 2.5T48 2.5Q49 0.5 50 2.5T52 2.5Q53 0.5 54 2.5T56 2.5Q57 0.5 58 2.5T60 2.5Q61 0.5 62 2.5T64 2.5Q65 0.5 66 2.5T68 2.5Q69 0.5 70 2.5T72 2.5Q73 0.5 74 2.5T76 2.5Q77 0.5 78 2.5T80 2.5" fill="none" stroke="#3f8fe0" stroke-width="1.1"/></svg></span><span class="b1">[</span><span class="ri">kind</span><span class="b1">]</span></div><div class="ib" style="left:56.80px;top:783.60px;width:16.42px;background:rgba(255,255,64,0.07)"></div><div class="gd" style="left:56.80px;top:783.60px;background:rgba(214,176,120,0.30)"></div><svg class="ta" style="left:58.80px;top:783.60px" width="12" height="19" viewBox="0 0 12 19"><path d="M0.5 10H9.5M6.5 7.5L9.5 10L6.5 12.5" fill="none" stroke="rgba(171,178,191,0.10)" stroke-width="1"/></svg><div class="ib" style="left:73.22px;top:783.60px;width:16.42px;background:rgba(127,255,127,0.07)"></div><div class="gd" style="left:73.22px;top:783.60px;background:rgba(190,205,190,0.16)"></div><svg class="ta" style="left:75.22px;top:783.60px" width="12" height="19" viewBox="0 0 12 19"><path d="M0.5 10H9.5M6.5 7.5L9.5 10L6.5 12.5" fill="none" stroke="rgba(171,178,191,0.10)" stroke-width="1"/></svg><div class="ib" style="left:89.64px;top:783.60px;width:16.42px;background:rgba(255,127,255,0.07)"></div><div class="gd" style="left:89.64px;top:783.60px;background:rgba(210,180,220,0.14)"></div><svg class="ta" style="left:91.64px;top:783.60px" width="12" height="19" viewBox="0 0 12 19"><path d="M0.5 10H9.5M6.5 7.5L9.5 10L6.5 12.5" fill="none" stroke="rgba(171,178,191,0.10)" stroke-width="1"/></svg><div class="ln" style="left:-8.50px;top:783.60px">36</div><div class="cl" style="left:106.06px;top:784.80px;width:622.14px"><span class="b2">}</span><span class="g"><span class="d">·</span></span><span class="b2">${</span><span class="ri">className</span><span class="g"><span class="d">·</span></span><span class="c">||</span><span class="g"><span class="d">·</span></span><span class="s">&#x27;&#x27;</span><span class="b2">}</span><span class="s">`</span><span class="b3">}</span></div><div class="ib" style="left:56.80px;top:802.60px;width:16.42px;background:rgba(255,255,64,0.07)"></div><div class="gd" style="left:56.80px;top:802.60px;background:rgba(214,176,120,0.30)"></div><svg class="ta" style="left:58.80px;top:802.60px" width="12" height="19" viewBox="0 0 12 19"><path d="M0.5 10H9.5M6.5 7.5L9.5 10L6.5 12.5" fill="none" stroke="rgba(171,178,191,0.10)" stroke-width="1"/></svg><div class="ib" style="left:73.22px;top:802.60px;width:16.42px;background:rgba(127,255,127,0.07)"></div><div class="gd" style="left:73.22px;top:802.60px;background:rgba(190,205,190,0.16)"></div><svg class="ta" style="left:75.22px;top:802.60px" width="12" height="19" viewBox="0 0 12 19"><path d="M0.5 10H9.5M6.5 7.5L9.5 10L6.5 12.5" fill="none" stroke="rgba(171,178,191,0.10)" stroke-width="1"/></svg><div class="ln" style="left:-8.50px;top:802.60px">37</div><div class="cl" style="left:89.64px;top:803.80px;width:638.56px"><span class="g">&gt;</span></div><div class="ib" style="left:56.80px;top:821.60px;width:16.42px;background:rgba(255,255,64,0.07)"></div><div class="gd" style="left:56.80px;top:821.60px;background:rgba(214,176,120,0.30)"></div><svg class="ta" style="left:58.80px;top:821.60px" width="12" height="19" viewBox="0 0 12 19"><path d="M0.5 10H9.5M6.5 7.5L9.5 10L6.5 12.5" fill="none" stroke="rgba(171,178,191,0.10)" stroke-width="1"/></svg><div class="ib" style="left:73.22px;top:821.60px;width:16.42px;background:rgba(127,255,127,0.07)"></div><div class="gd" style="left:73.22px;top:821.60px;background:rgba(190,205,190,0.16)"></div><svg class="ta" style="left:75.22px;top:821.60px" width="12" height="19" viewBox="0 0 12 19"><path d="M0.5 10H9.5M6.5 7.5L9.5 10L6.5 12.5" fill="none" stroke="rgba(171,178,191,0.10)" stroke-width="1"/></svg><div class="ib" style="left:89.64px;top:821.60px;width:16.42px;background:rgba(255,127,255,0.07)"></div><div class="gd" style="left:89.64px;top:821.60px;background:rgba(210,180,220,0.14)"></div><svg class="ta" style="left:91.64px;top:821.60px" width="12" height="19" viewBox="0 0 12 19"><path d="M0.5 10H9.5M6.5 7.5L9.5 10L6.5 12.5" fill="none" stroke="rgba(171,178,191,0.10)" stroke-width="1"/></svg><div class="ln" style="left:-8.50px;top:821.60px">38</div><div class="cl" style="left:106.06px;top:822.80px;width:622.14px"><span class="b3">{</span><span class="ri">loading</span><span class="g"><span class="d">·</span></span><span class="k">?</span><span class="g"><span class="d">·</span></span><span class="g">&lt;</span><span class="y">Spinner</span><span class="g"><span class="d">·</span></span><span class="oi">className</span><span class="c">=</span><span class="s">&#x27;h-5<span class="d">·</span>w-5&#x27;</span><span class="g"><span class="d">·</span></span><span class="g">/&gt;</span><span class="g"><span class="d">·</span></span><span class="k">:</span><span class="g"><span class="d">·</span></span><span class="ri">children</span><span class="b3">}</span></div><div class="ib" style="left:56.80px;top:840.60px;width:16.42px;background:rgba(255,255,64,0.07)"></div><div class="gd" style="left:56.80px;top:840.60px;background:rgba(214,176,120,0.30)"></div><svg class="ta" style="left:58.80px;top:840.60px" width="12" height="19" viewBox="0 0 12 19"><path d="M0.5 10H9.5M6.5 7.5L9.5 10L6.5 12.5" fill="none" stroke="rgba(171,178,191,0.10)" stroke-width="1"/></svg><div class="ib" style="left:73.22px;top:840.60px;width:16.42px;background:rgba(127,255,127,0.07)"></div><div class="gd" style="left:73.22px;top:840.60px;background:rgba(190,205,190,0.16)"></div><svg class="ta" style="left:75.22px;top:840.60px" width="12" height="19" viewBox="0 0 12 19"><path d="M0.5 10H9.5M6.5 7.5L9.5 10L6.5 12.5" fill="none" stroke="rgba(171,178,191,0.10)" stroke-width="1"/></svg><div class="ln" style="left:-8.50px;top:840.60px">39</div><div class="cl" style="left:89.64px;top:841.80px;width:638.56px"><span class="g">&lt;/</span><span class="r">button</span><span class="g">&gt;</span></div><div class="ib" style="left:56.80px;top:859.60px;width:16.42px;background:rgba(255,255,64,0.07)"></div><div class="gd" style="left:56.80px;top:859.60px;background:rgba(214,176,120,0.30)"></div><svg class="ta" style="left:58.80px;top:859.60px" width="12" height="19" viewBox="0 0 12 19"><path d="M0.5 10H9.5M6.5 7.5L9.5 10L6.5 12.5" fill="none" stroke="rgba(171,178,191,0.10)" stroke-width="1"/></svg><div class="ln" style="left:-8.50px;top:859.60px">40</div><div class="cl" style="left:73.22px;top:860.80px;width:654.98px"><span class="b2">)</span><span class="g">;</span><span class="cm"> </span><span class="wd2"><svg width="16.42" height="19" style="vertical-align:top;margin-top:-1.2px" viewBox="0 0 16.42 19"><path d="M1.5 10.2H15.5M6 5.7L1.5 10.2L6 14.7" fill="none" stroke="#686f80" stroke-width="1.3"/></svg></span><span class="cm"> #31-40 return</span></div><div class="ln" style="left:-8.50px;top:878.60px">41</div><div class="cl" style="left:56.80px;top:879.80px;width:671.40px"><span class="b1">}</span><span class="g">;</span><span class="cm"> </span><span class="wd2"><svg width="16.42" height="19" style="vertical-align:top;margin-top:-1.2px" viewBox="0 0 16.42 19"><path d="M1.5 10.2H15.5M6 5.7L1.5 10.2L6 14.7" fill="none" stroke="#686f80" stroke-width="1.3"/></svg></span><span class="cm"> #30-41 </span><span class="wd2"><svg width="16.42" height="19" style="vertical-align:top;margin-top:-1.2px" viewBox="0 0 16.42 19"><path d="M1 7.9H14M1 11H14M10.6 5.2L15.2 9.45L10.6 13.7" fill="none" stroke="#686f80" stroke-width="1.5"/></svg></span></div><div class="ln" style="left:-8.50px;top:897.60px">42</div><div class="cl" style="left:56.80px;top:898.80px;width:671.40px"></div>
<div class="lens" style="left:901.80px;top:87.30px;font-size:11.5px">Esteban Salazar, last month | 1 author (Esteban Salazar)</div><div class="ln act" style="left:836.50px;top:102.60px">1</div><div class="cl" style="left:901.80px;top:103.80px;width:671.70px"><span class="k">import</span><span class="g"><span class="d">·</span></span><span class="b1">{</span><span class="g"><span class="d">·</span></span><span class="r">ElementType</span><span class="g">,</span><span class="g"><span class="d">·</span></span><span class="r">ReactNode</span><span class="g"><span class="d">·</span></span><span class="b1">}</span><span class="g"><span class="d">·</span></span><span class="k">from</span><span class="g"><span class="d">·</span></span><span class="s">&#x27;react&#x27;</span><span class="g">;</span><span class="ic">  4.1k (gzipped: 1.8k)</span></div><div class="ln" style="left:836.50px;top:121.60px">2</div><div class="cl" style="left:901.80px;top:122.80px;width:671.70px"></div><div class="ln" style="left:836.50px;top:140.60px">3</div><div class="cl" style="left:901.80px;top:141.80px;width:671.70px"><span class="k">export</span><span class="g"><span class="d">·</span></span><span class="k">type</span><span class="g"><span class="d">·</span></span><span class="y">BaseCardProps</span><span class="g"><span class="d">·</span></span><span class="c">=</span><span class="g"><span class="d">·</span></span><span class="b1">{</span></div><div class="ib" style="left:901.80px;top:159.60px;width:16.42px;background:rgba(255,255,64,0.07)"></div><div class="gd" style="left:901.80px;top:159.60px;background:rgba(214,176,120,0.30)"></div><svg class="ta" style="left:903.80px;top:159.60px" width="12" height="19" viewBox="0 0 12 19"><path d="M0.5 10H9.5M6.5 7.5L9.5 10L6.5 12.5" fill="none" stroke="rgba(171,178,191,0.10)" stroke-width="1"/></svg><div class="ln" style="left:836.50px;top:159.60px">4</div><div class="cl" style="left:918.22px;top:160.80px;width:655.28px"><span class="r">classes</span><span class="g">:</span><span class="g"><span class="d">·</span></span><span class="y">string</span><span class="g">;</span></div><div class="ib" style="left:901.80px;top:178.60px;width:16.42px;background:rgba(255,255,64,0.07)"></div><div class="gd" style="left:901.80px;top:178.60px;background:rgba(214,176,120,0.30)"></div><svg class="ta" style="left:903.80px;top:178.60px" width="12" height="19" viewBox="0 0 12 19"><path d="M0.5 10H9.5M6.5 7.5L9.5 10L6.5 12.5" fill="none" stroke="rgba(171,178,191,0.10)" stroke-width="1"/></svg><div class="ln" style="left:836.50px;top:178.60px">5</div><div class="cl" style="left:918.22px;top:179.80px;width:655.28px"><span class="r">children</span><span class="g">:</span><span class="g"><span class="d">·</span></span><span class="y">ReactNode</span><span class="g">;</span></div><div class="ib" style="left:901.80px;top:197.60px;width:16.42px;background:rgba(255,255,64,0.07)"></div><div class="gd" style="left:901.80px;top:197.60px;background:rgba(214,176,120,0.30)"></div><svg class="ta" style="left:903.80px;top:197.60px" width="12" height="19" viewBox="0 0 12 19"><path d="M0.5 10H9.5M6.5 7.5L9.5 10L6.5 12.5" fill="none" stroke="rgba(171,178,191,0.10)" stroke-width="1"/></svg><div class="ln" style="left:836.50px;top:197.60px">6</div><div class="cl" style="left:918.22px;top:198.80px;width:655.28px"><span class="y">component</span><span class="k">?:</span><span class="g"><span class="d">·</span></span><span class="y">ElementType</span><span class="g">;</span></div><div class="ib" style="left:901.80px;top:216.60px;width:16.42px;background:rgba(255,255,64,0.07)"></div><div class="gd" style="left:901.80px;top:216.60px;background:rgba(214,176,120,0.30)"></div><svg class="ta" style="left:903.80px;top:216.60px" width="12" height="19" viewBox="0 0 12 19"><path d="M0.5 10H9.5M6.5 7.5L9.5 10L6.5 12.5" fill="none" stroke="rgba(171,178,191,0.10)" stroke-width="1"/></svg><div class="ln" style="left:836.50px;top:216.60px">7</div><div class="cl" style="left:918.22px;top:217.80px;width:655.28px"><span class="r">to</span><span class="k">?:</span><span class="g"><span class="d">·</span></span><span class="y">string</span><span class="g">;</span></div><div class="ln" style="left:836.50px;top:235.60px">8</div><div class="cl" style="left:901.80px;top:236.80px;width:671.70px"><span class="b1">}</span><span class="g">;</span><span class="cm"> </span><span class="wd2"><svg width="16.42" height="19" style="vertical-align:top;margin-top:-1.2px" viewBox="0 0 16.42 19"><path d="M1.5 10.2H15.5M6 5.7L1.5 10.2L6 14.7" fill="none" stroke="#686f80" stroke-width="1.3"/></svg></span><span class="cm"> #3-8 export type BaseCardProps =</span></div><div class="ln" style="left:836.50px;top:254.60px">9</div><div class="cl" style="left:901.80px;top:255.80px;width:671.70px"></div><div class="lens" style="left:901.80px;top:274.30px;font-size:12px">Complexity is 6 It&#x27;s time to do something...</div><div class="ln" style="left:836.50px;top:289.60px">10</div><div class="cl" style="left:901.80px;top:290.80px;width:671.70px"><span class="k">export</span><span class="g"><span class="d">·</span></span><span class="k">const</span><span class="g"><span class="d">·</span></span><span class="bl">BaseCard</span><span class="g"><span class="d">·</span></span><span class="c">=</span><span class="g"><span class="d">·</span></span><span class="b1">(</span><span class="b2">{</span></div><div class="ib" style="left:901.80px;top:308.60px;width:16.42px;background:rgba(255,255,64,0.07)"></div><div class="gd" style="left:901.80px;top:308.60px;background:rgba(214,176,120,0.30)"></div><svg class="ta" style="left:903.80px;top:308.60px" width="12" height="19" viewBox="0 0 12 19"><path d="M0.5 10H9.5M6.5 7.5L9.5 10L6.5 12.5" fill="none" stroke="rgba(171,178,191,0.10)" stroke-width="1"/></svg><div class="ln" style="left:836.50px;top:308.60px">11</div><div class="cl" style="left:918.22px;top:309.80px;width:655.28px"><span class="ri">classes</span><span class="g">,</span></div><div class="ib" style="left:901.80px;top:327.60px;width:16.42px;background:rgba(255,255,64,0.07)"></div><div class="gd" style="left:901.80px;top:327.60px;background:rgba(214,176,120,0.30)"></div><svg class="ta" style="left:903.80px;top:327.60px" width="12" height="19" viewBox="0 0 12 19"><path d="M0.5 10H9.5M6.5 7.5L9.5 10L6.5 12.5" fill="none" stroke="rgba(171,178,191,0.10)" stroke-width="1"/></svg><div class="ln" style="left:836.50px;top:327.60px">12</div><div class="cl" style="left:918.22px;top:328.80px;width:655.28px"><span class="r">component</span><span class="g">:</span><span class="g"><span class="d">·</span></span><span class="ri">Component</span><span class="g">,</span></div><div class="ib" style="left:901.80px;top:346.60px;width:16.42px;background:rgba(255,255,64,0.07)"></div><div class="gd" style="left:901.80px;top:346.60px;background:rgba(214,176,120,0.30)"></div><svg class="ta" style="left:903.80px;top:346.60px" width="12" height="19" viewBox="0 0 12 19"><path d="M0.5 10H9.5M6.5 7.5L9.5 10L6.5 12.5" fill="none" stroke="rgba(171,178,191,0.10)" stroke-width="1"/></svg><div class="ln" style="left:836.50px;top:346.60px">13</div><div class="cl" style="left:918.22px;top:347.80px;width:655.28px"><span class="g">...</span><span class="ri">props</span></div><div class="ln" style="left:836.50px;top:365.60px">14</div><div class="cl" style="left:901.80px;top:366.80px;width:671.70px"><span class="b2">}</span><span class="g">:</span><span class="g"><span class="d">·</span></span><span class="y">BaseCardProps</span><span class="b1">)</span><span class="g"><span class="d">·</span></span><span class="wd2"><svg width="16.42" height="19" style="vertical-align:top;margin-top:-1.2px" viewBox="0 0 16.42 19"><path d="M1 7.9H14M1 11H14M10.6 5.2L15.2 9.45L10.6 13.7" fill="none" stroke="#d55fde" stroke-width="1.5"/></svg></span><span class="g"><span class="d">·</span></span><span class="b1">{</span></div><div class="ib" style="left:901.80px;top:384.60px;width:16.42px;background:rgba(255,255,64,0.07)"></div><div class="gd" style="left:901.80px;top:384.60px;background:rgba(214,176,120,0.30)"></div><svg class="ta" style="left:903.80px;top:384.60px" width="12" height="19" viewBox="0 0 12 19"><path d="M0.5 10H9.5M6.5 7.5L9.5 10L6.5 12.5" fill="none" stroke="rgba(171,178,191,0.10)" stroke-width="1"/></svg><div class="ln" style="left:836.50px;top:384.60px">15</div><div class="cl" style="left:918.22px;top:385.80px;width:655.28px"><span class="k">if</span><span class="g"><span class="d">·</span></span><span class="b2">(</span><span class="ri">Component</span><span class="b2">)</span></div><div class="ib" style="left:901.80px;top:403.60px;width:16.42px;background:rgba(255,255,64,0.07)"></div><div class="gd" style="left:901.80px;top:403.60px;background:rgba(214,176,120,0.30)"></div><svg class="ta" style="left:903.80px;top:403.60px" width="12" height="19" viewBox="0 0 12 19"><path d="M0.5 10H9.5M6.5 7.5L9.5 10L6.5 12.5" fill="none" stroke="rgba(171,178,191,0.10)" stroke-width="1"/></svg><div class="ib" style="left:918.22px;top:403.60px;width:16.42px;background:rgba(127,255,127,0.07)"></div><div class="gd" style="left:918.22px;top:403.60px;background:rgba(190,205,190,0.16)"></div><svg class="ta" style="left:920.22px;top:403.60px" width="12" height="19" viewBox="0 0 12 19"><path d="M0.5 10H9.5M6.5 7.5L9.5 10L6.5 12.5" fill="none" stroke="rgba(171,178,191,0.10)" stroke-width="1"/></svg><div class="ln" style="left:836.50px;top:403.60px">16</div><div class="cl" style="left:934.64px;top:404.80px;width:638.86px"><span class="k">return</span><span class="g"><span class="d">·</span></span><span class="b2">(</span></div><div class="ib" style="left:901.80px;top:422.60px;width:16.42px;background:rgba(255,255,64,0.07)"></div><div class="gd" style="left:901.80px;top:422.60px;background:rgba(214,176,120,0.30)"></div><svg class="ta" style="left:903.80px;top:422.60px" width="12" height="19" viewBox="0 0 12 19"><path d="M0.5 10H9.5M6.5 7.5L9.5 10L6.5 12.5" fill="none" stroke="rgba(171,178,191,0.10)" stroke-width="1"/></svg><div class="ib" style="left:918.22px;top:422.60px;width:16.42px;background:rgba(127,255,127,0.07)"></div><div class="gd" style="left:918.22px;top:422.60px;background:rgba(190,205,190,0.16)"></div><svg class="ta" style="left:920.22px;top:422.60px" width="12" height="19" viewBox="0 0 12 19"><path d="M0.5 10H9.5M6.5 7.5L9.5 10L6.5 12.5" fill="none" stroke="rgba(171,178,191,0.10)" stroke-width="1"/></svg><div class="ib" style="left:934.64px;top:422.60px;width:16.42px;background:rgba(255,127,255,0.07)"></div><div class="gd" style="left:934.64px;top:422.60px;background:rgba(210,180,220,0.14)"></div><svg class="ta" style="left:936.64px;top:422.60px" width="12" height="19" viewBox="0 0 12 19"><path d="M0.5 10H9.5M6.5 7.5L9.5 10L6.5 12.5" fill="none" stroke="rgba(171,178,191,0.10)" stroke-width="1"/></svg><div class="ln" style="left:836.50px;top:422.60px">17</div><div class="cl" style="left:951.06px;top:423.80px;width:622.44px"><span class="g">&lt;</span><span class="y">Component</span></div><div class="ib" style="left:901.80px;top:441.60px;width:16.42px;background:rgba(255,255,64,0.07)"></div><div class="gd" style="left:901.80px;top:441.60px;background:rgba(214,176,120,0.30)"></div><svg class="ta" style="left:903.80px;top:441.60px" width="12" height="19" viewBox="0 0 12 19"><path d="M0.5 10H9.5M6.5 7.5L9.5 10L6.5 12.5" fill="none" stroke="rgba(171,178,191,0.10)" stroke-width="1"/></svg><div class="ib" style="left:918.22px;top:441.60px;width:16.42px;background:rgba(127,255,127,0.07)"></div><div class="gd" style="left:918.22px;top:441.60px;background:rgba(190,205,190,0.16)"></div><svg class="ta" style="left:920.22px;top:441.60px" width="12" height="19" viewBox="0 0 12 19"><path d="M0.5 10H9.5M6.5 7.5L9.5 10L6.5 12.5" fill="none" stroke="rgba(171,178,191,0.10)" stroke-width="1"/></svg><div class="ib" style="left:934.64px;top:441.60px;width:16.42px;background:rgba(255,127,255,0.07)"></div><div class="gd" style="left:934.64px;top:441.60px;background:rgba(210,180,220,0.14)"></div><svg class="ta" style="left:936.64px;top:441.60px" width="12" height="19" viewBox="0 0 12 19"><path d="M0.5 10H9.5M6.5 7.5L9.5 10L6.5 12.5" fill="none" stroke="rgba(171,178,191,0.10)" stroke-width="1"/></svg><div class="ib" style="left:951.06px;top:441.60px;width:16.42px;background:rgba(79,236,236,0.07)"></div><div class="gd" style="left:951.06px;top:441.60px;background:rgba(170,215,215,0.30)"></div><svg class="ta" style="left:953.06px;top:441.60px" width="12" height="19" viewBox="0 0 12 19"><path d="M0.5 10H9.5M6.5 7.5L9.5 10L6.5 12.5" fill="none" stroke="rgba(171,178,191,0.10)" stroke-width="1"/></svg><div class="ln" style="left:836.50px;top:441.60px">18</div><div class="cl" style="left:967.48px;top:442.80px;width:606.02px"><span class="oi">className</span><span class="c">=</span><span class="b3">{</span><span class="s">`p-4<span class="d">·</span>rounded-lg<span class="d">·</span>shadow-md<span class="d">·</span></span><span class="sw"><i style="background:#a8e08f"></i></span><span class="s">shadow-primary-300<span class="d">·</span>flex<span class="d">·</span>items-center</span></div><div class="ib" style="left:901.80px;top:460.60px;width:16.42px;background:rgba(255,255,64,0.07)"></div><div class="gd" style="left:901.80px;top:460.60px;background:rgba(214,176,120,0.30)"></div><svg class="ta" style="left:903.80px;top:460.60px" width="12" height="19" viewBox="0 0 12 19"><path d="M0.5 10H9.5M6.5 7.5L9.5 10L6.5 12.5" fill="none" stroke="rgba(171,178,191,0.10)" stroke-width="1"/></svg><div class="ib" style="left:918.22px;top:460.60px;width:16.42px;background:rgba(127,255,127,0.07)"></div><div class="gd" style="left:918.22px;top:460.60px;background:rgba(190,205,190,0.16)"></div><svg class="ta" style="left:920.22px;top:460.60px" width="12" height="19" viewBox="0 0 12 19"><path d="M0.5 10H9.5M6.5 7.5L9.5 10L6.5 12.5" fill="none" stroke="rgba(171,178,191,0.10)" stroke-width="1"/></svg><div class="ib" style="left:934.64px;top:460.60px;width:16.42px;background:rgba(255,127,255,0.07)"></div><div class="gd" style="left:934.64px;top:460.60px;background:rgba(210,180,220,0.14)"></div><svg class="ta" style="left:936.64px;top:460.60px" width="12" height="19" viewBox="0 0 12 19"><path d="M0.5 10H9.5M6.5 7.5L9.5 10L6.5 12.5" fill="none" stroke="rgba(171,178,191,0.10)" stroke-width="1"/></svg><div class="ib" style="left:951.06px;top:460.60px;width:16.42px;background:rgba(79,236,236,0.07)"></div><div class="gd" style="left:951.06px;top:460.60px;background:rgba(170,215,215,0.30)"></div><svg class="ta" style="left:953.06px;top:460.60px" width="12" height="19" viewBox="0 0 12 19"><path d="M0.5 10H9.5M6.5 7.5L9.5 10L6.5 12.5" fill="none" stroke="rgba(171,178,191,0.10)" stroke-width="1"/></svg><div class="ln" style="left:836.50px;top:460.60px">19</div><div class="cl" style="left:967.48px;top:461.80px;width:606.02px"><span class="b3">{</span><span class="g">...</span><span class="r">props</span><span class="b3">}</span></div><div class="ib" style="left:901.80px;top:479.60px;width:16.42px;background:rgba(255,255,64,0.07)"></div><div class="gd" style="left:901.80px;top:479.60px;background:rgba(214,176,120,0.30)"></div><svg class="ta" style="left:903.80px;top:479.60px" width="12" height="19" viewBox="0 0 12 19"><path d="M0.5 10H9.5M6.5 7.5L9.5 10L6.5 12.5" fill="none" stroke="rgba(171,178,191,0.10)" stroke-width="1"/></svg><div class="ib" style="left:918.22px;top:479.60px;width:16.42px;background:rgba(127,255,127,0.07)"></div><div class="gd" style="left:918.22px;top:479.60px;background:rgba(190,205,190,0.16)"></div><svg class="ta" style="left:920.22px;top:479.60px" width="12" height="19" viewBox="0 0 12 19"><path d="M0.5 10H9.5M6.5 7.5L9.5 10L6.5 12.5" fill="none" stroke="rgba(171,178,191,0.10)" stroke-width="1"/></svg><div class="ib" style="left:934.64px;top:479.60px;width:16.42px;background:rgba(255,127,255,0.07)"></div><div class="gd" style="left:934.64px;top:479.60px;background:rgba(210,180,220,0.14)"></div><svg class="ta" style="left:936.64px;top:479.60px" width="12" height="19" viewBox="0 0 12 19"><path d="M0.5 10H9.5M6.5 7.5L9.5 10L6.5 12.5" fill="none" stroke="rgba(171,178,191,0.10)" stroke-width="1"/></svg><div class="ln" style="left:836.50px;top:479.60px">20</div><div class="cl" style="left:951.06px;top:480.80px;width:622.44px"><span class="g">/&gt;</span></div><div class="ib" style="left:901.80px;top:498.60px;width:16.42px;background:rgba(255,255,64,0.07)"></div><div class="gd" style="left:901.80px;top:498.60px;background:rgba(214,176,120,0.30)"></div><svg class="ta" style="left:903.80px;top:498.60px" width="12" height="19" viewBox="0 0 12 19"><path d="M0.5 10H9.5M6.5 7.5L9.5 10L6.5 12.5" fill="none" stroke="rgba(171,178,191,0.10)" stroke-width="1"/></svg><div class="ib" style="left:918.22px;top:498.60px;width:16.42px;background:rgba(127,255,127,0.07)"></div><div class="gd" style="left:918.22px;top:498.60px;background:rgba(190,205,190,0.16)"></div><svg class="ta" style="left:920.22px;top:498.60px" width="12" height="19" viewBox="0 0 12 19"><path d="M0.5 10H9.5M6.5 7.5L9.5 10L6.5 12.5" fill="none" stroke="rgba(171,178,191,0.10)" stroke-width="1"/></svg><div class="ln" style="left:836.50px;top:498.60px">21</div><div class="cl" style="left:934.64px;top:499.80px;width:638.86px"><span class="b2">)</span><span class="g">;</span><span class="cm"> </span><span class="wd2"><svg width="16.42" height="19" style="vertical-align:top;margin-top:-1.2px" viewBox="0 0 16.42 19"><path d="M1.5 10.2H15.5M6 5.7L1.5 10.2L6 14.7" fill="none" stroke="#686f80" stroke-width="1.3"/></svg></span><span class="cm"> #16-21 return</span></div><div class="ib" style="left:901.80px;top:517.60px;width:16.42px;background:rgba(255,255,64,0.07)"></div><div class="gd" style="left:901.80px;top:517.60px;background:rgba(214,176,120,0.30)"></div><svg class="ta" style="left:903.80px;top:517.60px" width="12" height="19" viewBox="0 0 12 19"><path d="M0.5 10H9.5M6.5 7.5L9.5 10L6.5 12.5" fill="none" stroke="rgba(171,178,191,0.10)" stroke-width="1"/></svg><div class="ln" style="left:836.50px;top:517.60px">22</div><div class="cl" style="left:918.22px;top:518.80px;width:655.28px"><span class="k">return</span><span class="g"><span class="d">·</span></span><span class="b2">(</span></div><div class="ib" style="left:901.80px;top:536.60px;width:16.42px;background:rgba(255,255,64,0.07)"></div><div class="gd" style="left:901.80px;top:536.60px;background:rgba(214,176,120,0.30)"></div><svg class="ta" style="left:903.80px;top:536.60px" width="12" height="19" viewBox="0 0 12 19"><path d="M0.5 10H9.5M6.5 7.5L9.5 10L6.5 12.5" fill="none" stroke="rgba(171,178,191,0.10)" stroke-width="1"/></svg><div class="ib" style="left:918.22px;top:536.60px;width:16.42px;background:rgba(127,255,127,0.07)"></div><div class="gd" style="left:918.22px;top:536.60px;background:rgba(190,205,190,0.16)"></div><svg class="ta" style="left:920.22px;top:536.60px" width="12" height="19" viewBox="0 0 12 19"><path d="M0.5 10H9.5M6.5 7.5L9.5 10L6.5 12.5" fill="none" stroke="rgba(171,178,191,0.10)" stroke-width="1"/></svg><div class="ln" style="left:836.50px;top:536.60px">23</div><div class="cl" style="left:934.64px;top:537.80px;width:638.86px"><span class="g">&lt;</span><span class="r">div</span></div><div class="ib" style="left:901.80px;top:555.60px;width:16.42px;background:rgba(255,255,64,0.07)"></div><div class="gd" style="left:901.80px;top:555.60px;background:rgba(214,176,120,0.30)"></div><svg class="ta" style="left:903.80px;top:555.60px" width="12" height="19" viewBox="0 0 12 19"><path d="M0.5 10H9.5M6.5 7.5L9.5 10L6.5 12.5" fill="none" stroke="rgba(171,178,191,0.10)" stroke-width="1"/></svg><div class="ib" style="left:918.22px;top:555.60px;width:16.42px;background:rgba(127,255,127,0.07)"></div><div class="gd" style="left:918.22px;top:555.60px;background:rgba(190,205,190,0.16)"></div><svg class="ta" style="left:920.22px;top:555.60px" width="12" height="19" viewBox="0 0 12 19"><path d="M0.5 10H9.5M6.5 7.5L9.5 10L6.5 12.5" fill="none" stroke="rgba(171,178,191,0.10)" stroke-width="1"/></svg><div class="ib" style="left:934.64px;top:555.60px;width:16.42px;background:rgba(255,127,255,0.07)"></div><div class="gd" style="left:934.64px;top:555.60px;background:rgba(210,180,220,0.14)"></div><svg class="ta" style="left:936.64px;top:555.60px" width="12" height="19" viewBox="0 0 12 19"><path d="M0.5 10H9.5M6.5 7.5L9.5 10L6.5 12.5" fill="none" stroke="rgba(171,178,191,0.10)" stroke-width="1"/></svg><div class="ln" style="left:836.50px;top:555.60px">24</div><div class="cl" style="left:951.06px;top:556.80px;width:622.44px"><span class="oi">className</span><span class="c">=</span><span class="b3">{</span><span class="s">`p-4<span class="d">·</span>rounded-lg<span class="d">·</span>shadow-md<span class="d">·</span></span><span class="sw"><i style="background:#a8e08f"></i></span><span class="s">shadow-primary-300<span class="d">·</span>flex<span class="d">·</span>items-center<span class="d">·</span></span><span class="s"></span></div><div class="ib" style="left:901.80px;top:574.60px;width:16.42px;background:rgba(255,255,64,0.07)"></div><div class="gd" style="left:901.80px;top:574.60px;background:rgba(214,176,120,0.30)"></div><svg class="ta" style="left:903.80px;top:574.60px" width="12" height="19" viewBox="0 0 12 19"><path d="M0.5 10H9.5M6.5 7.5L9.5 10L6.5 12.5" fill="none" stroke="rgba(171,178,191,0.10)" stroke-width="1"/></svg><div class="ib" style="left:918.22px;top:574.60px;width:16.42px;background:rgba(127,255,127,0.07)"></div><div class="gd" style="left:918.22px;top:574.60px;background:rgba(190,205,190,0.16)"></div><svg class="ta" style="left:920.22px;top:574.60px" width="12" height="19" viewBox="0 0 12 19"><path d="M0.5 10H9.5M6.5 7.5L9.5 10L6.5 12.5" fill="none" stroke="rgba(171,178,191,0.10)" stroke-width="1"/></svg><div class="ib" style="left:934.64px;top:574.60px;width:16.42px;background:rgba(255,127,255,0.07)"></div><div class="gd" style="left:934.64px;top:574.60px;background:rgba(210,180,220,0.14)"></div><svg class="ta" style="left:936.64px;top:574.60px" width="12" height="19" viewBox="0 0 12 19"><path d="M0.5 10H9.5M6.5 7.5L9.5 10L6.5 12.5" fill="none" stroke="rgba(171,178,191,0.10)" stroke-width="1"/></svg><div class="ln" style="left:836.50px;top:574.60px">25</div><div class="cl" style="left:951.06px;top:575.80px;width:622.44px"><span class="b3">{</span><span class="g">...</span><span class="r">props</span><span class="b3">}</span></div><div class="ib" style="left:901.80px;top:593.60px;width:16.42px;background:rgba(255,255,64,0.07)"></div><div class="gd" style="left:901.80px;top:593.60px;background:rgba(214,176,120,0.30)"></div><svg class="ta" style="left:903.80px;top:593.60px" width="12" height="19" viewBox="0 0 12 19"><path d="M0.5 10H9.5M6.5 7.5L9.5 10L6.5 12.5" fill="none" stroke="rgba(171,178,191,0.10)" stroke-width="1"/></svg><div class="ib" style="left:918.22px;top:593.60px;width:16.42px;background:rgba(127,255,127,0.07)"></div><div class="gd" style="left:918.22px;top:593.60px;background:rgba(190,205,190,0.16)"></div><svg class="ta" style="left:920.22px;top:593.60px" width="12" height="19" viewBox="0 0 12 19"><path d="M0.5 10H9.5M6.5 7.5L9.5 10L6.5 12.5" fill="none" stroke="rgba(171,178,191,0.10)" stroke-width="1"/></svg><div class="ln" style="left:836.50px;top:593.60px">26</div><div class="cl" style="left:934.64px;top:594.80px;width:638.86px"><span class="g">/&gt;</span></div><div class="ib" style="left:901.80px;top:612.60px;width:16.42px;background:rgba(255,255,64,0.07)"></div><div class="gd" style="left:901.80px;top:612.60px;background:rgba(214,176,120,0.30)"></div><svg class="ta" style="left:903.80px;top:612.60px" width="12" height="19" viewBox="0 0 12 19"><path d="M0.5 10H9.5M6.5 7.5L9.5 10L6.5 12.5" fill="none" stroke="rgba(171,178,191,0.10)" stroke-width="1"/></svg><div class="ln" style="left:836.50px;top:612.60px">27</div><div class="cl" style="left:918.22px;top:613.80px;width:655.28px"><span class="b2">)</span><span class="g">;</span><span class="cm"> </span><span class="wd2"><svg width="16.42" height="19" style="vertical-align:top;margin-top:-1.2px" viewBox="0 0 16.42 19"><path d="M1.5 10.2H15.5M6 5.7L1.5 10.2L6 14.7" fill="none" stroke="#686f80" stroke-width="1.3"/></svg></span><span class="cm"> #22-27 return</span></div><div class="ln" style="left:836.50px;top:631.60px">28</div><div class="cl" style="left:901.80px;top:632.80px;width:671.70px"><span class="b1">}</span><span class="g">;</span><span class="cm"> </span><span class="wd2"><svg width="16.42" height="19" style="vertical-align:top;margin-top:-1.2px" viewBox="0 0 16.42 19"><path d="M1.5 10.2H15.5M6 5.7L1.5 10.2L6 14.7" fill="none" stroke="#686f80" stroke-width="1.3"/></svg></span><span class="cm"> #14-28 </span><span class="wd2"><svg width="16.42" height="19" style="vertical-align:top;margin-top:-1.2px" viewBox="0 0 16.42 19"><path d="M1 7.9H14M1 11H14M10.6 5.2L15.2 9.45L10.6 13.7" fill="none" stroke="#686f80" stroke-width="1.5"/></svg></span></div><div class="ln" style="left:836.50px;top:650.60px">29</div><div class="cl" style="left:901.80px;top:651.80px;width:671.70px"></div>

<!-- cursor -->
<div class="abs" style="left:57.5px;top:392.60px;width:2px;height:9px;background:#8fb8f0"></div>

<!-- minimap & scrollbar left -->
<div class="abs" style="left:721px;top:87px;width:7px;height:833px;background:rgba(0,0,0,0.06)"></div>
<div class="mm" style="left:736px;top:87px;width:6px;background:#d55fde"></div><div class="mm" style="left:743px;top:87px;width:1px;background:#d19a66"></div><div class="mm" style="left:745px;top:87px;width:10px;background:#ef596f"></div><div class="mm" style="left:755px;top:87px;width:1px;background:#abb2bf"></div><div class="mm" style="left:757px;top:87px;width:9px;background:#ef596f"></div><div class="mm" style="left:767px;top:87px;width:1px;background:#d19a66"></div><div class="mm" style="left:769px;top:87px;width:4px;background:#d55fde"></div><div class="mm" style="left:774px;top:87px;width:7px;background:#89ca78"></div><div class="mm" style="left:781px;top:87px;width:1px;background:#abb2bf"></div><div class="mm" style="left:736px;top:93px;width:6px;background:#d55fde"></div><div class="mm" style="left:743px;top:93px;width:1px;background:#d19a66"></div><div class="mm" style="left:745px;top:93px;width:7px;background:#ef596f"></div><div class="mm" style="left:753px;top:93px;width:1px;background:#d19a66"></div><div class="mm" style="left:755px;top:93px;width:4px;background:#d55fde"></div><div class="mm" style="left:760px;top:93px;width:12px;background:#89ca78"></div><div class="mm" style="left:772px;top:93px;width:1px;background:#abb2bf"></div><div class="mm" style="left:736px;top:99px;width:4px;background:#d55fde"></div><div class="mm" style="left:741px;top:99px;width:10px;background:#e5c07b"></div><div class="mm" style="left:752px;top:99px;width:1px;background:#2bbac5"></div><div class="mm" style="left:754px;top:99px;width:9px;background:#89ca78"></div><div class="mm" style="left:764px;top:99px;width:1px;background:#abb2bf"></div><div class="mm" style="left:766px;top:99px;width:11px;background:#89ca78"></div><div class="mm" style="left:777px;top:99px;width:1px;background:#abb2bf"></div><div class="mm" style="left:736px;top:105px;width:4px;background:#d55fde"></div><div class="mm" style="left:741px;top:105px;width:11px;background:#e5c07b"></div><div class="mm" style="left:753px;top:105px;width:1px;background:#2bbac5"></div><div class="mm" style="left:755px;top:105px;width:1px;background:#d19a66"></div><div class="mm" style="left:738px;top:108px;width:4px;background:#ef596f"></div><div class="mm" style="left:742px;top:108px;width:2px;background:#d55fde"></div><div class="mm" style="left:745px;top:108px;width:10px;background:#e5c07b"></div><div class="mm" style="left:755px;top:108px;width:1px;background:#abb2bf"></div><div class="mm" style="left:738px;top:111px;width:9px;background:#ef596f"></div><div class="mm" style="left:747px;top:111px;width:2px;background:#d55fde"></div><div class="mm" style="left:750px;top:111px;width:6px;background:#e5c07b"></div><div class="mm" style="left:756px;top:111px;width:1px;background:#abb2bf"></div><div class="mm" style="left:738px;top:114px;width:7px;background:#ef596f"></div><div class="mm" style="left:745px;top:114px;width:2px;background:#d55fde"></div><div class="mm" style="left:748px;top:114px;width:7px;background:#e5c07b"></div><div class="mm" style="left:755px;top:114px;width:1px;background:#abb2bf"></div><div class="mm" style="left:738px;top:117px;width:8px;background:#ef596f"></div><div class="mm" style="left:746px;top:117px;width:2px;background:#d55fde"></div><div class="mm" style="left:749px;top:117px;width:9px;background:#e5c07b"></div><div class="mm" style="left:758px;top:117px;width:1px;background:#abb2bf"></div><div class="mm" style="left:738px;top:120px;width:7px;background:#61afef"></div><div class="mm" style="left:745px;top:120px;width:2px;background:#d55fde"></div><div class="mm" style="left:748px;top:120px;width:1px;background:#d55fde"></div><div class="mm" style="left:749px;top:120px;width:5px;background:#ef596f"></div><div class="mm" style="left:754px;top:120px;width:1px;background:#abb2bf"></div><div class="mm" style="left:756px;top:120px;width:10px;background:#e5c07b"></div><div class="mm" style="left:766px;top:120px;width:1px;background:#d55fde"></div><div class="mm" style="left:771px;top:120px;width:4px;background:#e5c07b"></div><div class="mm" style="left:775px;top:120px;width:1px;background:#abb2bf"></div><div class="mm" style="left:738px;top:123px;width:8px;background:#ef596f"></div><div class="mm" style="left:746px;top:123px;width:2px;background:#d55fde"></div><div class="mm" style="left:749px;top:123px;width:7px;background:#e5c07b"></div><div class="mm" style="left:756px;top:123px;width:1px;background:#abb2bf"></div><div class="mm" style="left:738px;top:126px;width:4px;background:#ef596f"></div><div class="mm" style="left:742px;top:126px;width:2px;background:#d55fde"></div><div class="mm" style="left:745px;top:126px;width:8px;background:#89ca78"></div><div class="mm" style="left:754px;top:126px;width:1px;background:#abb2bf"></div><div class="mm" style="left:756px;top:126px;width:8px;background:#89ca78"></div><div class="mm" style="left:765px;top:126px;width:1px;background:#abb2bf"></div><div class="mm" style="left:767px;top:126px;width:7px;background:#89ca78"></div><div class="mm" style="left:775px;top:126px;width:1px;background:#abb2bf"></div><div class="mm" style="left:777px;top:126px;width:9px;background:#e5c07b"></div><div class="mm" style="left:786px;top:126px;width:1px;background:#abb2bf"></div><div class="mm" style="left:736px;top:129px;width:1px;background:#d19a66"></div><div class="mm" style="left:737px;top:129px;width:1px;background:#abb2bf"></div><div class="mm" style="left:736px;top:135px;width:5px;background:#d55fde"></div><div class="mm" style="left:742px;top:135px;width:5px;background:#e5c07b"></div><div class="mm" style="left:747px;top:135px;width:9px;background:#e5c07b"></div><div class="mm" style="left:756px;top:135px;width:1px;background:#abb2bf"></div><div class="mm" style="left:758px;top:135px;width:1px;background:#d19a66"></div><div class="mm" style="left:760px;top:135px;width:1px;background:#d55fde"></div><div class="mm" style="left:761px;top:135px;width:3px;background:#ef596f"></div><div class="mm" style="left:764px;top:135px;width:1px;background:#abb2bf"></div><div class="mm" style="left:766px;top:135px;width:6px;background:#e5c07b"></div><div class="mm" style="left:772px;top:135px;width:1px;background:#d55fde"></div><div class="mm" style="left:773px;top:135px;width:1px;background:#abb2bf"></div><div class="mm" style="left:775px;top:135px;width:6px;background:#e5c07b"></div><div class="mm" style="left:782px;top:135px;width:1px;background:#d19a66"></div><div class="mm" style="left:784px;top:135px;width:1px;background:#2bbac5"></div><div class="mm" style="left:786px;top:135px;width:1px;background:#d19a66"></div><div class="mm" style="left:738px;top:138px;width:7px;background:#ef596f"></div><div class="mm" style="left:745px;top:138px;width:1px;background:#abb2bf"></div><div class="mm" style="left:740px;top:141px;width:11px;background:#89ca78"></div><div class="mm" style="left:752px;top:141px;width:10px;background:#89ca78"></div><div class="mm" style="left:763px;top:141px;width:28px;background:#89ca78"></div><div class="mm" style="left:792px;top:141px;width:26px;background:#89ca78"></div><div class="mm" style="left:738px;top:144px;width:9px;background:#ef596f"></div><div class="mm" style="left:747px;top:144px;width:1px;background:#abb2bf"></div><div class="mm" style="left:740px;top:147px;width:14px;background:#89ca78"></div><div class="mm" style="left:755px;top:147px;width:12px;background:#89ca78"></div><div class="mm" style="left:768px;top:147px;width:30px;background:#89ca78"></div><div class="mm" style="left:799px;top:147px;width:19px;background:#89ca78"></div><div class="mm" style="left:736px;top:150px;width:1px;background:#d19a66"></div><div class="mm" style="left:737px;top:150px;width:1px;background:#abb2bf"></div><div class="mm" style="left:736px;top:156px;width:6px;background:#d55fde"></div><div class="mm" style="left:743px;top:156px;width:5px;background:#d55fde"></div><div class="mm" style="left:749px;top:156px;width:6px;background:#61afef"></div><div class="mm" style="left:756px;top:156px;width:1px;background:#2bbac5"></div><div class="mm" style="left:758px;top:156px;width:1px;background:#d19a66"></div><div class="mm" style="left:759px;top:156px;width:1px;background:#d55fde"></div><div class="mm" style="left:738px;top:159px;width:4px;background:#ef596f"></div><div class="mm" style="left:743px;top:159px;width:1px;background:#2bbac5"></div><div class="mm" style="left:745px;top:159px;width:9px;background:#89ca78"></div><div class="mm" style="left:754px;top:159px;width:1px;background:#abb2bf"></div><div class="mm" style="left:738px;top:162px;width:9px;background:#ef596f"></div><div class="mm" style="left:747px;top:162px;width:1px;background:#abb2bf"></div><div class="mm" style="left:738px;top:165px;width:7px;background:#ef596f"></div><div class="mm" style="left:745px;top:165px;width:1px;background:#abb2bf"></div><div class="mm" style="left:738px;top:168px;width:8px;background:#ef596f"></div><div class="mm" style="left:746px;top:168px;width:1px;background:#abb2bf"></div><div class="mm" style="left:738px;top:171px;width:3px;background:#abb2bf"></div><div class="mm" style="left:741px;top:171px;width:5px;background:#ef596f"></div><div class="mm" style="left:736px;top:174px;width:1px;background:#d55fde"></div><div class="mm" style="left:737px;top:174px;width:1px;background:#abb2bf"></div><div class="mm" style="left:739px;top:174px;width:11px;background:#e5c07b"></div><div class="mm" style="left:750px;top:174px;width:1px;background:#d19a66"></div><div class="mm" style="left:755px;top:174px;width:1px;background:#d19a66"></div><div class="mm" style="left:738px;top:177px;width:6px;background:#d55fde"></div><div class="mm" style="left:745px;top:177px;width:1px;background:#d55fde"></div><div class="mm" style="left:740px;top:180px;width:1px;background:#abb2bf"></div><div class="mm" style="left:741px;top:180px;width:6px;background:#ef596f"></div><div class="mm" style="left:742px;top:183px;width:1px;background:#2bbac5"></div><div class="mm" style="left:743px;top:183px;width:3px;background:#abb2bf"></div><div class="mm" style="left:746px;top:183px;width:5px;background:#ef596f"></div><div class="mm" style="left:751px;top:183px;width:1px;background:#2bbac5"></div><div class="mm" style="left:742px;top:186px;width:9px;background:#d19a66"></div><div class="mm" style="left:751px;top:186px;width:1px;background:#2bbac5"></div><div class="mm" style="left:752px;top:186px;width:1px;background:#2bbac5"></div><div class="mm" style="left:753px;top:186px;width:5px;background:#89ca78"></div><div class="mm" style="left:759px;top:186px;width:10px;background:#89ca78"></div><div class="mm" style="left:770px;top:186px;width:9px;background:#89ca78"></div><div class="mm" style="left:780px;top:186px;width:18px;background:#89ca78"></div><div class="mm" style="left:799px;top:186px;width:12px;background:#89ca78"></div><div class="mm" style="left:812px;top:186px;width:6px;background:#89ca78"></div><div class="mm" style="left:744px;top:189px;width:5px;background:#e5c07b"></div><div class="mm" style="left:749px;top:189px;width:9px;background:#e5c07b"></div><div class="mm" style="left:758px;top:189px;width:1px;background:#d19a66"></div><div class="mm" style="left:759px;top:189px;width:4px;background:#ef596f"></div><div class="mm" style="left:763px;top:189px;width:1px;background:#d19a66"></div><div class="mm" style="left:742px;top:192px;width:1px;background:#d55fde"></div><div class="mm" style="left:744px;top:192px;width:2px;background:#d55fde"></div><div class="mm" style="left:746px;top:192px;width:9px;background:#ef596f"></div><div class="mm" style="left:756px;top:192px;width:2px;background:#2bbac5"></div><div class="mm" style="left:759px;top:192px;width:2px;background:#89ca78"></div><div class="mm" style="left:761px;top:192px;width:1px;background:#d55fde"></div><div class="mm" style="left:762px;top:192px;width:1px;background:#89ca78"></div><div class="mm" style="left:763px;top:192px;width:1px;background:#2bbac5"></div><div class="mm" style="left:740px;top:195px;width:1px;background:#abb2bf"></div><div class="mm" style="left:742px;top:198px;width:1px;background:#2bbac5"></div><div class="mm" style="left:743px;top:198px;width:7px;background:#ef596f"></div><div class="mm" style="left:751px;top:198px;width:1px;background:#d55fde"></div><div class="mm" style="left:753px;top:198px;width:1px;background:#abb2bf"></div><div class="mm" style="left:754px;top:198px;width:7px;background:#e5c07b"></div><div class="mm" style="left:762px;top:198px;width:9px;background:#d19a66"></div><div class="mm" style="left:771px;top:198px;width:1px;background:#2bbac5"></div><div class="mm" style="left:772px;top:198px;width:4px;background:#89ca78"></div><div class="mm" style="left:777px;top:198px;width:4px;background:#89ca78"></div><div class="mm" style="left:782px;top:198px;width:2px;background:#abb2bf"></div><div class="mm" style="left:785px;top:198px;width:1px;background:#d55fde"></div><div class="mm" style="left:787px;top:198px;width:8px;background:#ef596f"></div><div class="mm" style="left:795px;top:198px;width:1px;background:#2bbac5"></div><div class="mm" style="left:740px;top:201px;width:2px;background:#abb2bf"></div><div class="mm" style="left:742px;top:201px;width:6px;background:#ef596f"></div><div class="mm" style="left:748px;top:201px;width:1px;background:#abb2bf"></div><div class="mm" style="left:738px;top:204px;width:1px;background:#d55fde"></div><div class="mm" style="left:739px;top:204px;width:1px;background:#abb2bf"></div><div class="mm" style="left:736px;top:207px;width:1px;background:#d19a66"></div><div class="mm" style="left:737px;top:207px;width:1px;background:#abb2bf"></div>
<div class="abs" style="left:818px;top:87px;width:13.7px;height:833px;background:#2a2e36;border-left:1px solid #3a3f48"></div>
<div class="abs" style="left:818px;top:87px;width:13.7px;height:491px;background:#3d424c;border-left:1px solid #4a4f59"></div>
<div class="abs" style="left:818px;top:246px;width:14px;height:2px;background:#4a78b8"></div>
<div class="abs" style="left:827px;top:260px;width:5px;height:9px;background:#3d7ed2"></div>
<div class="abs" style="left:827px;top:336px;width:5px;height:9px;background:#c7a03c"></div>
<div class="abs" style="left:827px;top:447px;width:5px;height:9px;background:#3d7ed2"></div>
<div class="abs" style="left:831.7px;top:30px;width:1.3px;height:890px;background:#1d2025"></div>
<div class="abs" style="left:1573.5px;top:87px;width:8px;height:833px;background:rgba(0,0,0,0.05)"></div>

<!-- tooltip -->
<div class="abs" style="left:51px;top:358px;width:123px;height:21.5px;background:#073b5b;border:1px solid #1577b8"></div>
<div class="abs" style="left:56px;top:361px;font-size:13.6px;line-height:15px;color:#c3d4de;white-space:nowrap">No definition found</div>
<svg class="abs" style="left:51px;top:379px" width="18" height="9" viewBox="0 0 18 9"><path d="M0 0H18L9 8.5Z" fill="#1d8ad0"/></svg>
</body></html>
